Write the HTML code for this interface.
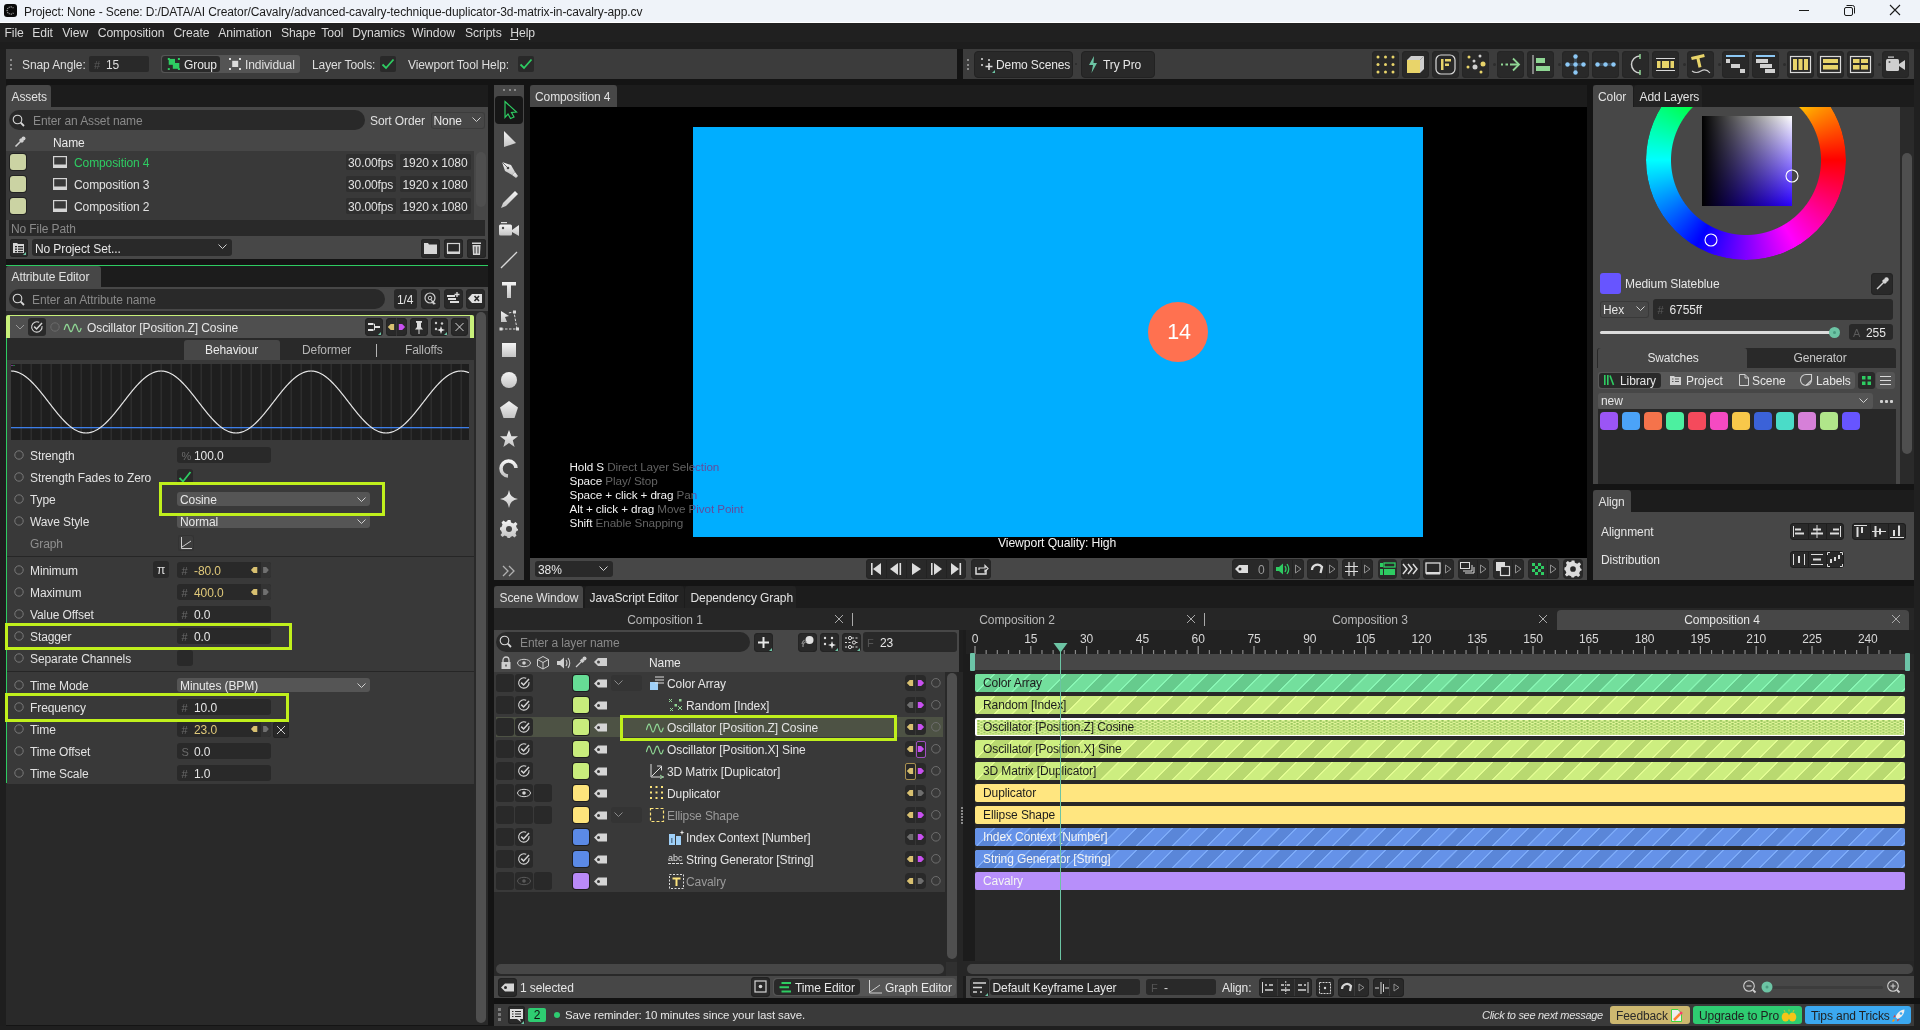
<!DOCTYPE html>
<html><head><meta charset="utf-8">
<style>
*{box-sizing:border-box;margin:0;padding:0}
html,body{width:1920px;height:1030px;overflow:hidden;background:#141414;font-family:"Liberation Sans",sans-serif;font-size:12px;color:#dcdcdc}
.a{position:absolute}
.t{position:absolute;white-space:pre;line-height:1;letter-spacing:-0.1px}
</style></head><body>
<div class="a" style="left:0px;top:42px;width:6px;height:988px;background:#1e1e1e;"></div>
<div class="a" style="left:1914px;top:42px;width:6px;height:988px;background:#202020;"></div>
<div class="a" style="left:0px;top:1026px;width:1920px;height:4px;background:#1f1f1f;"></div>
<div class="a" style="left:0px;top:0px;width:1920px;height:22px;background:#eff3f9;"></div>
<div class="a" style="left:0px;top:22px;width:1920px;height:1px;background:#ffffff;"></div>
<div class="a" style="left:4px;top:4px;width:13px;height:13px;background:#0a0a0a;border-radius:3px"></div>
<svg class="a" style="left:4px;top:4px;" width="13" height="13" viewBox="0 0 13 13"><path d="M9.5 4.2 A3.6 3.6 0 1 0 9.5 8.8" fill="none" stroke="#9a9a9a" stroke-width="1.3" stroke-dasharray="1.2 0.8"/></svg>
<div class="t" style="left:24px;top:5.84px;font-size:12px;color:#1b1b1b;">Project: None - Scene: D:/DATA/AI Creator/Cavalry/advanced-cavalry-technique-duplicator-3d-matrix-in-cavalry-app.cv</div>
<div class="a" style="left:1799px;top:10px;width:10px;height:1px;background:#1b1b1b;"></div>
<svg class="a" style="left:1843px;top:4px;" width="13" height="12" viewBox="0 0 13 12"><rect x="1.5" y="3.5" width="8" height="8" rx="1.5" fill="none" stroke="#1b1b1b" stroke-width="1"/><path d="M3.5 1.5 H9.5 A2 2 0 0 1 11.5 3.5 V9.5" fill="none" stroke="#1b1b1b" stroke-width="1"/></svg>
<svg class="a" style="left:1889px;top:4px;" width="12" height="12" viewBox="0 0 12 12"><path d="M1 1 L11 11 M11 1 L1 11" stroke="#1b1b1b" stroke-width="1.1"/></svg>
<div class="a" style="left:0px;top:23px;width:1920px;height:19px;background:#202020;"></div>
<div class="a" style="left:0px;top:42px;width:1920px;height:7px;background:#1d1d1d;"></div>
<div class="t" style="left:4.5px;top:26.67px;font-size:12.2px;color:#d8d8d8;">File</div>
<div class="t" style="left:32.3px;top:26.67px;font-size:12.2px;color:#d8d8d8;">Edit</div>
<div class="t" style="left:62.3px;top:26.67px;font-size:12.2px;color:#d8d8d8;">View</div>
<div class="t" style="left:97.7px;top:26.67px;font-size:12.2px;color:#d8d8d8;">Composition</div>
<div class="t" style="left:173.4px;top:26.67px;font-size:12.2px;color:#d8d8d8;">Create</div>
<div class="t" style="left:218.3px;top:26.67px;font-size:12.2px;color:#d8d8d8;">Animation</div>
<div class="t" style="left:280.9px;top:26.67px;font-size:12.2px;color:#d8d8d8;">Shape</div>
<div class="t" style="left:321.3px;top:26.67px;font-size:12.2px;color:#d8d8d8;">Tool</div>
<div class="t" style="left:352.3px;top:26.67px;font-size:12.2px;color:#d8d8d8;">Dynamics</div>
<div class="t" style="left:412.1px;top:26.67px;font-size:12.2px;color:#d8d8d8;">Window</div>
<div class="t" style="left:465.1px;top:26.67px;font-size:12.2px;color:#d8d8d8;">Scripts</div>
<div class="t" style="left:510.3px;top:26.67px;font-size:12.2px;color:#d8d8d8;">Help</div>
<div class="a" style="left:510px;top:39px;width:8px;height:1px;background:#d8d8d8;"></div>
<div class="a" style="left:6px;top:49px;width:951px;height:30px;background:#3c3c3c;"></div>
<div class="a" style="left:963px;top:49px;width:951px;height:30px;background:#3c3c3c;"></div>
<div class="a" style="left:10px;top:59.0px;width:2px;height:2px;background:#8a8a8a;"></div>
<div class="a" style="left:10px;top:63.5px;width:2px;height:2px;background:#8a8a8a;"></div>
<div class="a" style="left:10px;top:68.0px;width:2px;height:2px;background:#8a8a8a;"></div>
<div class="a" style="left:967px;top:59.0px;width:2px;height:2px;background:#8a8a8a;"></div>
<div class="a" style="left:967px;top:63.5px;width:2px;height:2px;background:#8a8a8a;"></div>
<div class="a" style="left:967px;top:68.0px;width:2px;height:2px;background:#8a8a8a;"></div>
<div class="t" style="left:22px;top:58.84px;font-size:12px;color:#dedede;">Snap Angle:</div>
<div class="a" style="left:89px;top:56px;width:60px;height:16px;background:#292929;border-radius:2px"></div>
<div class="t" style="left:94px;top:59.69px;font-size:11px;color:#5a5a5a;">#</div>
<div class="t" style="left:106px;top:58.84px;font-size:12px;color:#dedede;">15</div>
<div class="a" style="left:161px;top:55px;width:139px;height:18px;background:#545454;border-radius:3px"></div>
<div class="a" style="left:162px;top:56px;width:58px;height:16px;background:#2a2a2a;border-radius:3px"></div>
<svg class="a" style="left:167px;top:57px;" width="13" height="13" viewBox="0 0 13 13"><rect x="0.8" y="1" width="2" height="2" fill="#2ecc62"/><rect x="10.9" y="1" width="2" height="2" fill="#2ecc62"/><rect x="0.8" y="11.1" width="2" height="2" fill="#2ecc62"/><rect x="10.9" y="11.1" width="2" height="2" fill="#2ecc62"/><rect x="1.7" y="1.9" width="6.3" height="5.9" fill="#2ecc62"/><rect x="5.8" y="6" width="6.5" height="5.8" fill="#2ecc62"/></svg>
<div class="t" style="left:184px;top:58.84px;font-size:12px;color:#e8e8e8;">Group</div>
<svg class="a" style="left:228px;top:57px;" width="13" height="13" viewBox="0 0 13 13"><rect x="1" y="1" width="2" height="2" fill="#dcdcdc"/><rect x="11" y="1" width="2" height="2" fill="#dcdcdc"/><rect x="1" y="11" width="2" height="2" fill="#dcdcdc"/><rect x="11" y="11" width="2" height="2" fill="#dcdcdc"/><rect x="4.2" y="3.8" width="6" height="6.2" fill="#dcdcdc"/></svg>
<div class="t" style="left:245px;top:58.84px;font-size:12px;color:#e0e0e0;">Individual</div>
<div class="t" style="left:312px;top:58.84px;font-size:12px;color:#dedede;">Layer Tools:</div>
<div class="a" style="left:380px;top:56px;width:16px;height:16px;background:#292929;border-radius:2px"></div>
<svg class="a" style="left:380px;top:56px;" width="16" height="16" viewBox="0 0 16 16"><path d="M2.5 8.5 L6 12 L13.5 3.5" fill="none" stroke="#2ecc62" stroke-width="1.8"/></svg>
<div class="t" style="left:408px;top:58.84px;font-size:12px;color:#dedede;">Viewport Tool Help:</div>
<div class="a" style="left:518px;top:56px;width:16px;height:16px;background:#292929;border-radius:2px"></div>
<svg class="a" style="left:518px;top:56px;" width="16" height="16" viewBox="0 0 16 16"><path d="M2.5 8.5 L6 12 L13.5 3.5" fill="none" stroke="#2ecc62" stroke-width="1.8"/></svg>
<div class="a" style="left:974px;top:51px;width:99px;height:27px;background:#292929;border-radius:4px;border:1px solid #222"></div>
<svg class="a" style="left:980px;top:57px;" width="16" height="16" viewBox="0 0 16 16"><circle cx="2" cy="2" r="1" fill="#ddd"/><circle cx="9" cy="3" r="1" fill="#ddd"/><circle cx="2" cy="8" r="1" fill="#ddd"/><path d="M9 6 V13 M5.5 9.5 H12.5" stroke="#ddd" stroke-width="1.6"/><path d="M12 16 L15 13 V16Z" fill="#6cc4a4"/></svg>
<div class="t" style="left:996px;top:58.84px;font-size:12px;color:#e6e6e6;">Demo Scenes</div>
<div class="a" style="left:1075px;top:63px;width:2px;height:2px;background:#2a2a2a;border-radius:1px"></div>
<div class="a" style="left:1081px;top:51px;width:74px;height:27px;background:#292929;border-radius:4px;border:1px solid #222"></div>
<svg class="a" style="left:1088px;top:56px;" width="10" height="17" viewBox="0 0 10 17"><path d="M6 0 L1 9 H5 L3.5 17 L9 7 H5.5Z" fill="#6cc4a4"/></svg>
<div class="t" style="left:1103px;top:58.84px;font-size:12px;color:#e6e6e6;">Try Pro</div>
<div class="a" style="left:1372px;top:51px;width:27px;height:27px;background:#292929;border-radius:4px;box-shadow:inset 0 0 0 1px #262626"></div>
<svg class="a" style="left:1372px;top:51px;" width="27" height="27" viewBox="0 0 27 27"><circle cx="6.0" cy="6.0" r="1.5" fill="#e8d46a"/><circle cx="6.0" cy="13.5" r="1.5" fill="#e8d46a"/><circle cx="6.0" cy="21.0" r="1.5" fill="#e8d46a"/><circle cx="13.5" cy="6.0" r="1.5" fill="#e8d46a"/><circle cx="13.5" cy="13.5" r="1.5" fill="#e8d46a"/><circle cx="13.5" cy="21.0" r="1.5" fill="#e8d46a"/><circle cx="21.0" cy="6.0" r="1.5" fill="#e8d46a"/><circle cx="21.0" cy="13.5" r="1.5" fill="#e8d46a"/><circle cx="21.0" cy="21.0" r="1.5" fill="#e8d46a"/></svg>
<div class="a" style="left:1402px;top:51px;width:27px;height:27px;background:#292929;border-radius:4px;box-shadow:inset 0 0 0 1px #262626"></div>
<svg class="a" style="left:1402px;top:51px;" width="27" height="27" viewBox="0 0 27 27"><path d="M5 9 L9 5 H22 L18 9Z" fill="#cfcfcf"/><path d="M18 9 L22 5 V18 L18 22Z" fill="#cfcfcf"/><rect x="5" y="9" width="13" height="13" fill="#e8d46a"/></svg>
<div class="a" style="left:1432px;top:51px;width:27px;height:27px;background:#292929;border-radius:4px;box-shadow:inset 0 0 0 1px #262626"></div>
<svg class="a" style="left:1432px;top:51px;" width="27" height="27" viewBox="0 0 27 27"><rect x="4" y="4" width="19" height="19" rx="5" fill="none" stroke="#dadada" stroke-width="1.2"/><rect x="9" y="8" width="2.5" height="11" fill="#e8d46a"/><rect x="13" y="8" width="6" height="2.5" fill="#e8d46a"/><rect x="13" y="12.5" width="4" height="2.5" fill="#e8d46a"/></svg>
<div class="a" style="left:1462px;top:51px;width:27px;height:27px;background:#292929;border-radius:4px;box-shadow:inset 0 0 0 1px #262626"></div>
<svg class="a" style="left:1462px;top:51px;" width="27" height="27" viewBox="0 0 27 27"><circle cx="7" cy="6" r="1.5" fill="#e8d46a"/><circle cx="18" cy="5" r="1.5" fill="#cfcfcf"/><circle cx="12" cy="10" r="1.5" fill="#cfcfcf"/><circle cx="21" cy="13" r="2.5" fill="#e8d46a"/><circle cx="13" cy="16" r="2.5" fill="#cfcfcf"/><circle cx="6" cy="16" r="1.5" fill="#e8d46a"/><circle cx="19" cy="21" r="1.5" fill="#e8d46a"/></svg>
<div class="a" style="left:1497px;top:51px;width:27px;height:27px;background:#292929;border-radius:4px;box-shadow:inset 0 0 0 1px #262626"></div>
<svg class="a" style="left:1497px;top:51px;" width="27" height="27" viewBox="0 0 27 27"><path d="M4 13.5 H6 M8.5 13.5 H11 M13 13.5 H22" stroke="#8fd694" stroke-width="1.8"/><path d="M16 7.5 L22 13.5 L16 19.5" fill="none" stroke="#8fd694" stroke-width="1.8"/></svg>
<div class="a" style="left:1527px;top:51px;width:27px;height:27px;background:#292929;border-radius:4px;box-shadow:inset 0 0 0 1px #262626"></div>
<svg class="a" style="left:1527px;top:51px;" width="27" height="27" viewBox="0 0 27 27"><rect x="5.5" y="4" width="1" height="19" fill="#dadada"/><rect x="9" y="7" width="9" height="5" fill="#8fd694"/><rect x="9" y="15" width="14" height="5" fill="#8fd694"/></svg>
<div class="a" style="left:1562px;top:51px;width:27px;height:27px;background:#292929;border-radius:4px;box-shadow:inset 0 0 0 1px #262626"></div>
<svg class="a" style="left:1562px;top:51px;" width="27" height="27" viewBox="0 0 27 27"><path d="M13.5 5 V22 M5 13.5 H22" stroke="#3a4a58" stroke-width="3"/><circle cx="13.5" cy="5.5" r="2.2" fill="#8cc8f5"/><circle cx="5.5" cy="13.5" r="2.2" fill="#8cc8f5"/><circle cx="13.5" cy="13.5" r="2.2" fill="#8cc8f5"/><circle cx="21.5" cy="13.5" r="2.2" fill="#8cc8f5"/><circle cx="13.5" cy="21.5" r="2.2" fill="#8cc8f5"/></svg>
<div class="a" style="left:1592px;top:51px;width:27px;height:27px;background:#292929;border-radius:4px;box-shadow:inset 0 0 0 1px #262626"></div>
<svg class="a" style="left:1592px;top:51px;" width="27" height="27" viewBox="0 0 27 27"><path d="M5 13.5 H22" stroke="#3a4a58" stroke-width="3"/><circle cx="5.5" cy="13.5" r="2.2" fill="#8cc8f5"/><circle cx="13.5" cy="13.5" r="2.2" fill="#8cc8f5"/><circle cx="21.5" cy="13.5" r="2.2" fill="#8cc8f5"/></svg>
<div class="a" style="left:1622px;top:51px;width:27px;height:27px;background:#292929;border-radius:4px;box-shadow:inset 0 0 0 1px #262626"></div>
<svg class="a" style="left:1622px;top:51px;" width="27" height="27" viewBox="0 0 27 27"><path d="M18 5 A8.5 8.5 0 1 0 18 22" fill="none" stroke="#cfcfcf" stroke-width="1.5"/><path d="M18 3 V8 M18 19 V24" stroke="#8fd694" stroke-width="1.5"/></svg>
<div class="a" style="left:1652px;top:51px;width:27px;height:27px;background:#292929;border-radius:4px;box-shadow:inset 0 0 0 1px #262626"></div>
<svg class="a" style="left:1652px;top:51px;" width="27" height="27" viewBox="0 0 27 27"><rect x="4" y="7" width="19" height="1" fill="#dadada"/><rect x="4" y="19" width="19" height="1" fill="#dadada"/><rect x="5" y="10" width="3.5" height="7" fill="#e8d46a"/><rect x="10" y="10" width="7" height="7" fill="#e8d46a"/><rect x="18.5" y="10" width="3.5" height="7" fill="#e8d46a"/></svg>
<div class="a" style="left:1687px;top:51px;width:27px;height:27px;background:#292929;border-radius:4px;box-shadow:inset 0 0 0 1px #262626"></div>
<svg class="a" style="left:1687px;top:51px;" width="27" height="27" viewBox="0 0 27 27"><path d="M4 6 L17 3 L17.8 6 L12.5 7.3 L14.5 16 L11.5 16.8 L9.5 8 L4.8 9Z" fill="#e8d46a"/><path d="M5 20 Q9 23 14 20 T23 22" fill="none" stroke="#cfcfcf" stroke-width="1.1"/></svg>
<div class="a" style="left:1722px;top:51px;width:27px;height:27px;background:#292929;border-radius:4px;box-shadow:inset 0 0 0 1px #262626"></div>
<svg class="a" style="left:1722px;top:51px;" width="27" height="27" viewBox="0 0 27 27"><rect x="4" y="4" width="19" height="2" fill="#8cc8f5"/><rect x="4" y="8" width="4" height="4" fill="#d0d0d0"/><rect x="9" y="13" width="9" height="4" fill="#d0d0d0"/><rect x="18" y="18" width="5" height="4" fill="#d0d0d0"/></svg>
<div class="a" style="left:1752px;top:51px;width:27px;height:27px;background:#292929;border-radius:4px;box-shadow:inset 0 0 0 1px #262626"></div>
<svg class="a" style="left:1752px;top:51px;" width="27" height="27" viewBox="0 0 27 27"><rect x="4" y="4" width="19" height="2" fill="#8cc8f5"/><rect x="4" y="8" width="12" height="4" fill="#d0d0d0"/><rect x="8" y="13" width="12" height="4" fill="#d0d0d0"/><rect x="13" y="18" width="10" height="4" fill="#d0d0d0"/></svg>
<div class="a" style="left:1787px;top:51px;width:27px;height:27px;background:#292929;border-radius:4px;box-shadow:inset 0 0 0 1px #262626"></div>
<svg class="a" style="left:1787px;top:51px;" width="27" height="27" viewBox="0 0 27 27"><rect x="3.5" y="5.5" width="20" height="16" fill="none" stroke="#dadada" stroke-width="1.2"/><rect x="6" y="8" width="4" height="11" fill="#e8d46a"/><rect x="11.5" y="8" width="4" height="11" fill="#e8d46a"/><rect x="17" y="8" width="4" height="11" fill="#e8d46a"/></svg>
<div class="a" style="left:1817px;top:51px;width:27px;height:27px;background:#292929;border-radius:4px;box-shadow:inset 0 0 0 1px #262626"></div>
<svg class="a" style="left:1817px;top:51px;" width="27" height="27" viewBox="0 0 27 27"><rect x="3.5" y="5.5" width="20" height="16" fill="none" stroke="#dadada" stroke-width="1.2"/><rect x="6" y="8" width="15" height="4" fill="#e8d46a"/><rect x="6" y="14" width="15" height="4.5" fill="#e8d46a"/></svg>
<div class="a" style="left:1847px;top:51px;width:27px;height:27px;background:#292929;border-radius:4px;box-shadow:inset 0 0 0 1px #262626"></div>
<svg class="a" style="left:1847px;top:51px;" width="27" height="27" viewBox="0 0 27 27"><rect x="3.5" y="5.5" width="20" height="16" fill="none" stroke="#dadada" stroke-width="1.2"/><rect x="6" y="8" width="6.5" height="4" fill="#e8d46a"/><rect x="14" y="8" width="7" height="4" fill="#e8d46a"/><rect x="6" y="14" width="6.5" height="4.5" fill="#e8d46a"/><rect x="14" y="14" width="7" height="4.5" fill="#e8d46a"/></svg>
<div class="a" style="left:1882px;top:51px;width:27px;height:27px;background:#292929;border-radius:4px;box-shadow:inset 0 0 0 1px #262626"></div>
<svg class="a" style="left:1882px;top:51px;" width="27" height="27" viewBox="0 0 27 27"><rect x="4" y="8" width="13" height="12" rx="1.5" fill="#cfcfcf"/><rect x="6" y="5.5" width="6" height="1.2" fill="#cfcfcf"/><path d="M17 13 L23 9 V19 L17 15Z" fill="#cfcfcf"/><circle cx="7.5" cy="11" r="1" fill="#555"/></svg>
<div class="a" style="left:1493px;top:63px;width:3px;height:3px;background:#2c2c2c;border-radius:2px"></div>
<div class="a" style="left:1558px;top:63px;width:3px;height:3px;background:#2c2c2c;border-radius:2px"></div>
<div class="a" style="left:1683px;top:63px;width:3px;height:3px;background:#2c2c2c;border-radius:2px"></div>
<div class="a" style="left:1718px;top:63px;width:3px;height:3px;background:#2c2c2c;border-radius:2px"></div>
<div class="a" style="left:1783px;top:63px;width:3px;height:3px;background:#2c2c2c;border-radius:2px"></div>
<div class="a" style="left:1878px;top:63px;width:3px;height:3px;background:#2c2c2c;border-radius:2px"></div>
<div class="a" style="left:6px;top:85px;width:482px;height:22px;background:#1c1c1c;"></div>
<div class="a" style="left:6px;top:85px;width:45px;height:22px;background:#474747;border-radius:3px 3px 0 0"></div>
<div class="t" style="left:11.5px;top:90.84px;font-size:12px;color:#e2e2e2;">Assets</div>
<div class="a" style="left:6px;top:107px;width:482px;height:152px;background:#474747;"></div>
<div class="a" style="left:9px;top:110px;width:356px;height:20px;background:#292929;border-radius:10px"></div>
<svg class="a" style="left:12px;top:114px;" width="14" height="14" viewBox="0 0 14 14"><circle cx="5.5" cy="5.5" r="4.3" fill="none" stroke="#d8d8d8" stroke-width="1.1"/><path d="M8.7 8.7 L12 12" stroke="#d8d8d8" stroke-width="1.8"/></svg>
<div class="t" style="left:33px;top:114.84px;font-size:12px;color:#8a8a8a;">Enter an Asset name</div>
<div class="t" style="left:370px;top:114.84px;font-size:12px;color:#e0e0e0;">Sort Order</div>
<div class="a" style="left:431px;top:111.5px;width:54px;height:17px;background:#474747;border-radius:3px;box-shadow:inset 0 0 0 1px #3c3c3c"></div>
<div class="t" style="left:433.5px;top:114.84px;font-size:12px;color:#e8e8e8;">None</div>
<svg class="a" style="left:472px;top:117px;" width="9" height="6" viewBox="0 0 9 6"><path d="M0.5 0.5 L4.5 4.5 L8.5 0.5" fill="none" stroke="#cfcfcf" stroke-width="1"/></svg>
<svg class="a" style="left:14px;top:136px;" width="12" height="12" viewBox="0 0 12 12"><path d="M1.5 10.5 L7 5" stroke="#cfcfcf" stroke-width="1.6"/><path d="M6 3 L9 6" stroke="#cfcfcf" stroke-width="3"/><circle cx="9.5" cy="2.5" r="2" fill="#cfcfcf"/></svg>
<div class="t" style="left:53px;top:136.84px;font-size:12px;color:#eaeaea;">Name</div>
<div class="a" style="left:6px;top:151px;width:468px;height:69px;background:#393939;"></div>
<div class="a" style="left:474px;top:151px;width:14px;height:69px;background:#474747;"></div>
<div class="a" style="left:476px;top:152px;width:10px;height:55px;background:#4f4f4f;border-radius:5px"></div>
<div class="a" style="left:10px;top:154px;width:16px;height:16px;background:#cbd3a3;border-radius:3px;box-shadow:0 0 0 1px #222"></div>
<svg class="a" style="left:53px;top:156px;" width="14" height="12" viewBox="0 0 14 12"><rect x="0.6" y="0.6" width="12.8" height="10.8" fill="none" stroke="#d5d5d5" stroke-width="1.2"/><rect x="0.6" y="8.5" width="12.8" height="3" fill="#d5d5d5"/></svg>
<div class="t" style="left:74px;top:156.84px;font-size:12px;color:#2ecc62;">Composition 4</div>
<div class="a" style="left:346px;top:154px;width:50px;height:16px;background:#2f2f2f;border-radius:2px"></div>
<div class="t" style="left:348px;top:156.84px;font-size:12px;color:#e2e2e2;">30.00fps</div>
<div class="a" style="left:400px;top:154px;width:71px;height:16px;background:#2f2f2f;border-radius:2px"></div>
<div class="t" style="left:402.5px;top:156.84px;font-size:12px;color:#e2e2e2;">1920 x 1080</div>
<div class="a" style="left:10px;top:176px;width:16px;height:16px;background:#cbd3a3;border-radius:3px;box-shadow:0 0 0 1px #222"></div>
<svg class="a" style="left:53px;top:178px;" width="14" height="12" viewBox="0 0 14 12"><rect x="0.6" y="0.6" width="12.8" height="10.8" fill="none" stroke="#d5d5d5" stroke-width="1.2"/><rect x="0.6" y="8.5" width="12.8" height="3" fill="#d5d5d5"/></svg>
<div class="t" style="left:74px;top:178.84px;font-size:12px;color:#e2e2e2;">Composition 3</div>
<div class="a" style="left:346px;top:176px;width:50px;height:16px;background:#2f2f2f;border-radius:2px"></div>
<div class="t" style="left:348px;top:178.84px;font-size:12px;color:#e2e2e2;">30.00fps</div>
<div class="a" style="left:400px;top:176px;width:71px;height:16px;background:#2f2f2f;border-radius:2px"></div>
<div class="t" style="left:402.5px;top:178.84px;font-size:12px;color:#e2e2e2;">1920 x 1080</div>
<div class="a" style="left:10px;top:198px;width:16px;height:16px;background:#cbd3a3;border-radius:3px;box-shadow:0 0 0 1px #222"></div>
<svg class="a" style="left:53px;top:200px;" width="14" height="12" viewBox="0 0 14 12"><rect x="0.6" y="0.6" width="12.8" height="10.8" fill="none" stroke="#d5d5d5" stroke-width="1.2"/><rect x="0.6" y="8.5" width="12.8" height="3" fill="#d5d5d5"/></svg>
<div class="t" style="left:74px;top:200.84px;font-size:12px;color:#e2e2e2;">Composition 2</div>
<div class="a" style="left:346px;top:198px;width:50px;height:16px;background:#2f2f2f;border-radius:2px"></div>
<div class="t" style="left:348px;top:200.84px;font-size:12px;color:#e2e2e2;">30.00fps</div>
<div class="a" style="left:400px;top:198px;width:71px;height:16px;background:#2f2f2f;border-radius:2px"></div>
<div class="t" style="left:402.5px;top:200.84px;font-size:12px;color:#e2e2e2;">1920 x 1080</div>
<div class="a" style="left:9px;top:220px;width:476px;height:16px;background:#292929;"></div>
<div class="t" style="left:11px;top:222.84px;font-size:12px;color:#8a8a8a;">No File Path</div>
<div class="a" style="left:10px;top:239px;width:18px;height:18px;background:#292929;border-radius:3px;box-shadow:inset 0 0 0 1px #242424"></div>
<svg class="a" style="left:12px;top:241px;" width="14" height="14" viewBox="0 0 14 14"><path d="M1 2 H5 L6 3 H12 V12 H1Z" fill="#d5d5d5"/><rect x="3" y="5" width="2" height="1.3" fill="#292929"/><rect x="6" y="5" width="5" height="1.3" fill="#292929"/><rect x="3" y="7.5" width="2" height="1.3" fill="#292929"/><rect x="6" y="7.5" width="5" height="1.3" fill="#292929"/><rect x="3" y="10" width="2" height="1.3" fill="#292929"/><rect x="6" y="10" width="5" height="1.3" fill="#292929"/><path d="M11 14 L14 11 V14Z" fill="#6cc4a4"/></svg>
<div class="a" style="left:32px;top:239px;width:200px;height:17px;background:#292929;border-radius:3px"></div>
<div class="t" style="left:35px;top:242.84px;font-size:12px;color:#e6e6e6;">No Project Set...</div>
<svg class="a" style="left:218px;top:244px;" width="9" height="6" viewBox="0 0 9 6"><path d="M0.5 0.5 L4.5 4.5 L8.5 0.5" fill="none" stroke="#cfcfcf" stroke-width="1"/></svg>
<div class="a" style="left:420.5px;top:238.5px;width:19px;height:19px;background:#292929;border-radius:3px;box-shadow:inset 0 0 0 1px #242424"></div>
<svg class="a" style="left:420.5px;top:238.5px;" width="19" height="19" viewBox="0 0 19 19"><path d="M3 4 H7 L8 5.5 H16 V15 H3Z" fill="#d5d5d5"/></svg>
<div class="a" style="left:443.5px;top:238.5px;width:19px;height:19px;background:#292929;border-radius:3px;box-shadow:inset 0 0 0 1px #242424"></div>
<svg class="a" style="left:443.5px;top:238.5px;" width="19" height="19" viewBox="0 0 19 19"><rect x="3.5" y="4.5" width="12" height="9" fill="none" stroke="#d5d5d5" stroke-width="1.2"/><rect x="3" y="12.5" width="13" height="2.5" fill="#d5d5d5"/></svg>
<div class="a" style="left:466.5px;top:238.5px;width:19px;height:19px;background:#292929;border-radius:3px;box-shadow:inset 0 0 0 1px #242424"></div>
<svg class="a" style="left:466.5px;top:238.5px;" width="19" height="19" viewBox="0 0 19 19"><rect x="5" y="3.5" width="9" height="1.5" fill="#d5d5d5"/><path d="M5.5 6 H13.5 L13 16 H6Z" fill="#d5d5d5"/><path d="M8 7.5 V14.5 M11 7.5 V14.5" stroke="#292929" stroke-width="1"/></svg>
<div class="a" style="left:6px;top:265px;width:482px;height:1px;background:#2ecc62;"></div>
<div class="a" style="left:6px;top:266px;width:482px;height:21px;background:#1c1c1c;"></div>
<div class="a" style="left:6px;top:266px;width:95px;height:21px;background:#474747;border-radius:3px 3px 0 0"></div>
<div class="t" style="left:11.5px;top:270.84px;font-size:12px;color:#e2e2e2;">Attribute Editor</div>
<div class="a" style="left:6px;top:287px;width:482px;height:24px;background:#474747;"></div>
<div class="a" style="left:6px;top:311px;width:482px;height:714px;background:#292929;"></div>
<div class="a" style="left:9px;top:289px;width:376px;height:20px;background:#292929;border-radius:10px"></div>
<svg class="a" style="left:12px;top:293px;" width="14" height="14" viewBox="0 0 14 14"><circle cx="5.5" cy="5.5" r="4.3" fill="none" stroke="#d8d8d8" stroke-width="1.1"/><path d="M8.7 8.7 L12 12" stroke="#d8d8d8" stroke-width="1.8"/></svg>
<div class="t" style="left:32px;top:293.84px;font-size:12px;color:#8a8a8a;">Enter an Attribute name</div>
<div class="a" style="left:394px;top:289px;width:23px;height:19.5px;background:#292929;border-radius:3px"></div>
<div class="t" style="left:397px;top:293.84px;font-size:12px;color:#e6e6e6;">1/4</div>
<div class="a" style="left:420.5px;top:289px;width:19.5px;height:19.5px;background:#292929;border-radius:4px;box-shadow:inset 0 0 0 1px #262626"></div>
<svg class="a" style="left:420.5px;top:289px;" width="19" height="19" viewBox="0 0 19 19"><circle cx="9" cy="9" r="5" fill="none" stroke="#cfcfcf" stroke-width="1.2"/><circle cx="9" cy="9" r="1.8" fill="none" stroke="#cfcfcf" stroke-width="1"/><path d="M9 9 L15 15 L12 15.5Z M10 10 L15.5 12Z" fill="#cfcfcf"/></svg>
<div class="a" style="left:443.5px;top:289px;width:19.5px;height:19.5px;background:#292929;border-radius:4px;box-shadow:inset 0 0 0 1px #262626"></div>
<svg class="a" style="left:443.5px;top:289px;" width="19" height="19" viewBox="0 0 19 19"><rect x="3" y="6" width="8" height="2" fill="#e0e0e0"/><rect x="4" y="9" width="8" height="2" fill="#e0e0e0"/><rect x="6" y="12" width="9" height="2" fill="#e0e0e0"/><path d="M13 3 V8 M10.5 5.5 H15.5" stroke="#e0e0e0" stroke-width="1.3"/></svg>
<div class="a" style="left:465.5px;top:289px;width:19.5px;height:19.5px;background:#292929;border-radius:4px;box-shadow:inset 0 0 0 1px #262626"></div>
<svg class="a" style="left:465.5px;top:289px;" width="19" height="19" viewBox="0 0 19 19"><path d="M2 9.5 L6 5 H16 V14 H6Z" fill="#e0e0e0"/><path d="M8.5 7 L13 12 M13 7 L8.5 12" stroke="#292929" stroke-width="1.6"/></svg>
<div class="a" style="left:476px;top:312px;width:10px;height:711px;background:#4f4f4f;border-radius:5px"></div>
<div class="a" style="left:6px;top:315px;width:468px;height:23px;background:#c8f07a;border-radius:2px 2px 0 0"></div>
<div class="a" style="left:10px;top:316px;width:460px;height:22px;background:#4f4f4f;"></div>
<div class="a" style="left:6px;top:338px;width:1px;height:445px;background:#2ecc62;"></div>
<svg class="a" style="left:15px;top:322px;" width="10" height="10" viewBox="0 0 10 10"><path d="M1 3 L5 7 L9 3" fill="none" stroke="#9a9a9a" stroke-width="1"/></svg>
<div class="a" style="left:28px;top:318px;width:18px;height:18px;background:#292929;border-radius:3px"></div>
<svg class="a" style="left:28px;top:318px;" width="18" height="18" viewBox="0 0 18 18"><path d="M14 8.2 A5.2 5.2 0 1 1 11.2 4.3" fill="none" stroke="#d5d5d5" stroke-width="1.1"/><path d="M6.2 8.6 L8.6 11 L14 5" fill="none" stroke="#d5d5d5" stroke-width="1.5"/></svg>
<svg class="a" style="left:50px;top:322px;" width="10" height="10" viewBox="0 0 10 10"><circle cx="5" cy="5" r="4.2" fill="none" stroke="#6a6a6a" stroke-width="1"/></svg>
<svg class="a" style="left:62px;top:318px;" width="22" height="16" viewBox="0 0 22 16"><polyline points="2.30,11.44 2.55,10.78 2.80,10.09 3.05,9.39 3.30,8.72 3.55,8.08 3.80,7.52 4.05,7.05 4.30,6.68 4.55,6.43 4.80,6.31 5.05,6.32 5.30,6.47 5.55,6.74 5.80,7.13 6.05,7.63 6.30,8.21 6.55,8.85 6.80,9.53 7.05,10.23 7.30,10.92 7.55,11.57 7.80,12.16 8.05,12.67 8.30,13.09 8.55,13.39 8.80,13.56 9.05,13.60 9.30,13.50 9.55,13.28 9.80,12.94 10.05,12.48 10.30,11.93 10.55,11.31 10.80,10.64 11.05,9.95 11.30,9.26 11.55,8.59 11.80,7.97 12.05,7.42 12.30,6.96 12.55,6.62 12.80,6.40 13.05,6.30 13.30,6.34 13.55,6.51 13.80,6.81 14.05,7.23 14.30,7.74 14.55,8.33 14.80,8.98 15.05,9.67 15.30,10.37 15.55,11.05 15.80,11.69 16.05,12.27 16.30,12.77 16.55,13.16 16.80,13.43 17.05,13.58 17.30,13.59 17.55,13.47 17.80,13.22 18.05,12.85 18.30,12.38 18.55,11.82 18.80,11.18 19.05,10.51" fill="none" stroke="#8fd694" stroke-width="1.3" stroke-linecap="round"/></svg>
<div class="t" style="left:87px;top:321.84px;font-size:12px;color:#e6e6e6;">Oscillator [Position.Z] Cosine</div>
<div class="a" style="left:365px;top:318px;width:17.5px;height:18px;background:#292929;border-radius:4px;box-shadow:inset 0 0 0 1px #242424"></div>
<svg class="a" style="left:365px;top:318px;" width="17.5" height="18" viewBox="0 0 17.5 18"><rect x="3" y="5" width="5" height="2" fill="#e0e0e0"/><rect x="3" y="11" width="5" height="2" fill="#e0e0e0"/><path d="M8 6 H9.5 V12 H8" fill="none" stroke="#e0e0e0" stroke-width="1"/><rect x="10" y="8" width="5" height="2" fill="#e0e0e0"/><path d="M13 17 L16 14 V17Z" fill="#6cc4a4"/></svg>
<div class="a" style="left:386px;top:318px;width:21px;height:18px;background:#292929;border-radius:4px;box-shadow:inset 0 0 0 1px #242424"></div>
<svg class="a" style="left:386px;top:318px;" width="21" height="18" viewBox="0 0 21 18"><rect x="10" y="0" width="1" height="18" fill="#363636"/><path d="M8.1 5.9 H4.7 L1.8 8.95 L4.7 12 H8.1Z" fill="#d8c070"/><path d="M12.8 5.9 H16.2 L19.1 8.95 L16.2 12 H12.8Z" fill="#c850f0"/></svg>
<div class="a" style="left:410px;top:318px;width:17.5px;height:18px;background:#292929;border-radius:4px;box-shadow:inset 0 0 0 1px #242424"></div>
<svg class="a" style="left:410px;top:318px;" width="17.5" height="18" viewBox="0 0 17.5 18"><path d="M6 3 H12 V4.5 L11 5 V9 L13 11.5 H5 L7 9 V5 L6 4.5Z" fill="#dadada"/><rect x="8.5" y="11" width="1" height="5" fill="#dadada"/></svg>
<div class="a" style="left:430.5px;top:318px;width:17px;height:18px;background:#292929;border-radius:4px;box-shadow:inset 0 0 0 1px #242424"></div>
<svg class="a" style="left:430.5px;top:318px;" width="17" height="18" viewBox="0 0 17 18"><circle cx="5" cy="5" r="1.2" fill="#ccc"/><circle cx="11" cy="5.5" r="1.2" fill="#ccc"/><circle cx="5" cy="11" r="1.2" fill="#ccc"/><path d="M10 8 L11 11 L14 12 L11 13 L10 16 L9 13 L6 12 L9 11Z" fill="#e8e8e8"/><path d="M13 17 L16 14 V17Z" fill="#6cc4a4"/></svg>
<div class="a" style="left:450.5px;top:318px;width:17px;height:18px;background:#292929;border-radius:4px;box-shadow:inset 0 0 0 1px #242424"></div>
<svg class="a" style="left:450.5px;top:318px;" width="17" height="18" viewBox="0 0 17 18"><path d="M4.5 5 L12.5 13 M12.5 5 L4.5 13" stroke="#d8d8d8" stroke-width="1"/></svg>
<div class="a" style="left:7px;top:338px;width:467px;height:22px;background:#292929;"></div>
<div class="a" style="left:184px;top:340px;width:96px;height:20px;background:#474747;border-radius:3px 3px 0 0"></div>
<div class="t" style="left:205px;top:343.84px;font-size:12px;color:#eaeaea;">Behaviour</div>
<div class="t" style="left:302px;top:343.84px;font-size:12px;color:#b5b5b5;">Deformer</div>
<div class="a" style="left:375.5px;top:344px;width:1px;height:13px;background:#b5b5b5;"></div>
<div class="t" style="left:405px;top:343.84px;font-size:12px;color:#b5b5b5;">Falloffs</div>
<div class="a" style="left:7px;top:360px;width:467px;height:424px;background:#393939;"></div>
<div class="a" style="left:11px;top:364px;width:458px;height:76px;background:#1e1e1e;"></div>
<svg class="a" style="left:11px;top:364px;" width="458" height="76" viewBox="0 0 458 76"><rect x="9.5" y="0" width="1.4" height="76" fill="#2f2f2f"/><rect x="19.5" y="0" width="1.4" height="76" fill="#2f2f2f"/><rect x="29.5" y="0" width="1.4" height="76" fill="#2f2f2f"/><rect x="39.5" y="0" width="1.4" height="76" fill="#2f2f2f"/><rect x="49.5" y="0" width="1.4" height="76" fill="#2f2f2f"/><rect x="59.5" y="0" width="1.4" height="76" fill="#2f2f2f"/><rect x="69.5" y="0" width="1.4" height="76" fill="#2f2f2f"/><rect x="79.5" y="0" width="1.4" height="76" fill="#2f2f2f"/><rect x="89.5" y="0" width="1.4" height="76" fill="#2f2f2f"/><rect x="99.5" y="0" width="1.4" height="76" fill="#2f2f2f"/><rect x="109.5" y="0" width="1.4" height="76" fill="#2f2f2f"/><rect x="119.5" y="0" width="1.4" height="76" fill="#2f2f2f"/><rect x="129.5" y="0" width="1.4" height="76" fill="#2f2f2f"/><rect x="139.5" y="0" width="1.4" height="76" fill="#2f2f2f"/><rect x="149.5" y="0" width="1.4" height="76" fill="#2f2f2f"/><rect x="159.5" y="0" width="1.4" height="76" fill="#2f2f2f"/><rect x="169.5" y="0" width="1.4" height="76" fill="#2f2f2f"/><rect x="179.5" y="0" width="1.4" height="76" fill="#2f2f2f"/><rect x="189.5" y="0" width="1.4" height="76" fill="#2f2f2f"/><rect x="199.5" y="0" width="1.4" height="76" fill="#2f2f2f"/><rect x="209.5" y="0" width="1.4" height="76" fill="#2f2f2f"/><rect x="219.5" y="0" width="1.4" height="76" fill="#2f2f2f"/><rect x="229.5" y="0" width="1.4" height="76" fill="#2f2f2f"/><rect x="239.5" y="0" width="1.4" height="76" fill="#2f2f2f"/><rect x="249.5" y="0" width="1.4" height="76" fill="#2f2f2f"/><rect x="259.5" y="0" width="1.4" height="76" fill="#2f2f2f"/><rect x="269.5" y="0" width="1.4" height="76" fill="#2f2f2f"/><rect x="279.5" y="0" width="1.4" height="76" fill="#2f2f2f"/><rect x="289.5" y="0" width="1.4" height="76" fill="#2f2f2f"/><rect x="299.5" y="0" width="1.4" height="76" fill="#2f2f2f"/><rect x="309.5" y="0" width="1.4" height="76" fill="#2f2f2f"/><rect x="319.5" y="0" width="1.4" height="76" fill="#2f2f2f"/><rect x="329.5" y="0" width="1.4" height="76" fill="#2f2f2f"/><rect x="339.5" y="0" width="1.4" height="76" fill="#2f2f2f"/><rect x="349.5" y="0" width="1.4" height="76" fill="#2f2f2f"/><rect x="359.5" y="0" width="1.4" height="76" fill="#2f2f2f"/><rect x="369.5" y="0" width="1.4" height="76" fill="#2f2f2f"/><rect x="379.5" y="0" width="1.4" height="76" fill="#2f2f2f"/><rect x="389.5" y="0" width="1.4" height="76" fill="#2f2f2f"/><rect x="399.5" y="0" width="1.4" height="76" fill="#2f2f2f"/><rect x="409.5" y="0" width="1.4" height="76" fill="#2f2f2f"/><rect x="419.5" y="0" width="1.4" height="76" fill="#2f2f2f"/><rect x="429.5" y="0" width="1.4" height="76" fill="#2f2f2f"/><rect x="439.5" y="0" width="1.4" height="76" fill="#2f2f2f"/><rect x="449.5" y="0" width="1.4" height="76" fill="#2f2f2f"/><rect x="459.5" y="0" width="1.4" height="76" fill="#2f2f2f"/><rect x="0" y="63" width="458" height="1.3" fill="#3d7ee8"/><polyline points="0.0,7.00 0.5,7.01 1.0,7.03 1.5,7.06 2.0,7.11 2.5,7.17 3.0,7.24 3.5,7.33 4.0,7.43 4.5,7.55 5.0,7.68 5.5,7.82 6.0,7.97 6.5,8.14 7.0,8.32 7.5,8.52 8.0,8.72 8.5,8.94 9.0,9.18 9.5,9.42 10.0,9.68 10.5,9.95 11.0,10.23 11.5,10.53 12.0,10.83 12.5,11.15 13.0,11.48 13.5,11.83 14.0,12.18 14.5,12.54 15.0,12.92 15.5,13.31 16.0,13.71 16.5,14.11 17.0,14.53 17.5,14.96 18.0,15.40 18.5,15.85 19.0,16.31 19.5,16.78 20.0,17.26 20.5,17.74 21.0,18.24 21.5,18.74 22.0,19.26 22.5,19.78 23.0,20.31 23.5,20.84 24.0,21.39 24.5,21.94 25.0,22.50 25.5,23.07 26.0,23.64 26.5,24.22 27.0,24.80 27.5,25.39 28.0,25.99 28.5,26.59 29.0,27.19 29.5,27.81 30.0,28.42 30.5,29.04 31.0,29.66 31.5,30.29 32.0,30.92 32.5,31.55 33.0,32.19 33.5,32.83 34.0,33.47 34.5,34.11 35.0,34.76 35.5,35.41 36.0,36.05 36.5,36.70 37.0,37.35 37.5,38.00 38.0,38.65 38.5,39.30 39.0,39.95 39.5,40.59 40.0,41.24 40.5,41.89 41.0,42.53 41.5,43.17 42.0,43.81 42.5,44.45 43.0,45.08 43.5,45.71 44.0,46.34 44.5,46.96 45.0,47.58 45.5,48.19 46.0,48.81 46.5,49.41 47.0,50.01 47.5,50.61 48.0,51.20 48.5,51.78 49.0,52.36 49.5,52.93 50.0,53.50 50.5,54.06 51.0,54.61 51.5,55.16 52.0,55.69 52.5,56.22 53.0,56.74 53.5,57.26 54.0,57.76 54.5,58.26 55.0,58.74 55.5,59.22 56.0,59.69 56.5,60.15 57.0,60.60 57.5,61.04 58.0,61.47 58.5,61.89 59.0,62.29 59.5,62.69 60.0,63.08 60.5,63.46 61.0,63.82 61.5,64.17 62.0,64.52 62.5,64.85 63.0,65.17 63.5,65.47 64.0,65.77 64.5,66.05 65.0,66.32 65.5,66.58 66.0,66.82 66.5,67.06 67.0,67.28 67.5,67.48 68.0,67.68 68.5,67.86 69.0,68.03 69.5,68.18 70.0,68.32 70.5,68.45 71.0,68.57 71.5,68.67 72.0,68.76 72.5,68.83 73.0,68.89 73.5,68.94 74.0,68.97 74.5,68.99 75.0,69.00 75.5,68.99 76.0,68.97 76.5,68.94 77.0,68.89 77.5,68.83 78.0,68.76 78.5,68.67 79.0,68.57 79.5,68.45 80.0,68.32 80.5,68.18 81.0,68.03 81.5,67.86 82.0,67.68 82.5,67.48 83.0,67.28 83.5,67.06 84.0,66.82 84.5,66.58 85.0,66.32 85.5,66.05 86.0,65.77 86.5,65.47 87.0,65.17 87.5,64.85 88.0,64.52 88.5,64.17 89.0,63.82 89.5,63.46 90.0,63.08 90.5,62.69 91.0,62.29 91.5,61.89 92.0,61.47 92.5,61.04 93.0,60.60 93.5,60.15 94.0,59.69 94.5,59.22 95.0,58.74 95.5,58.26 96.0,57.76 96.5,57.26 97.0,56.74 97.5,56.22 98.0,55.69 98.5,55.16 99.0,54.61 99.5,54.06 100.0,53.50 100.5,52.93 101.0,52.36 101.5,51.78 102.0,51.20 102.5,50.61 103.0,50.01 103.5,49.41 104.0,48.81 104.5,48.19 105.0,47.58 105.5,46.96 106.0,46.34 106.5,45.71 107.0,45.08 107.5,44.45 108.0,43.81 108.5,43.17 109.0,42.53 109.5,41.89 110.0,41.24 110.5,40.59 111.0,39.95 111.5,39.30 112.0,38.65 112.5,38.00 113.0,37.35 113.5,36.70 114.0,36.05 114.5,35.41 115.0,34.76 115.5,34.11 116.0,33.47 116.5,32.83 117.0,32.19 117.5,31.55 118.0,30.92 118.5,30.29 119.0,29.66 119.5,29.04 120.0,28.42 120.5,27.81 121.0,27.19 121.5,26.59 122.0,25.99 122.5,25.39 123.0,24.80 123.5,24.22 124.0,23.64 124.5,23.07 125.0,22.50 125.5,21.94 126.0,21.39 126.5,20.84 127.0,20.31 127.5,19.78 128.0,19.26 128.5,18.74 129.0,18.24 129.5,17.74 130.0,17.26 130.5,16.78 131.0,16.31 131.5,15.85 132.0,15.40 132.5,14.96 133.0,14.53 133.5,14.11 134.0,13.71 134.5,13.31 135.0,12.92 135.5,12.54 136.0,12.18 136.5,11.83 137.0,11.48 137.5,11.15 138.0,10.83 138.5,10.53 139.0,10.23 139.5,9.95 140.0,9.68 140.5,9.42 141.0,9.18 141.5,8.94 142.0,8.72 142.5,8.52 143.0,8.32 143.5,8.14 144.0,7.97 144.5,7.82 145.0,7.68 145.5,7.55 146.0,7.43 146.5,7.33 147.0,7.24 147.5,7.17 148.0,7.11 148.5,7.06 149.0,7.03 149.5,7.01 150.0,7.00 150.5,7.01 151.0,7.03 151.5,7.06 152.0,7.11 152.5,7.17 153.0,7.24 153.5,7.33 154.0,7.43 154.5,7.55 155.0,7.68 155.5,7.82 156.0,7.97 156.5,8.14 157.0,8.32 157.5,8.52 158.0,8.72 158.5,8.94 159.0,9.18 159.5,9.42 160.0,9.68 160.5,9.95 161.0,10.23 161.5,10.53 162.0,10.83 162.5,11.15 163.0,11.48 163.5,11.83 164.0,12.18 164.5,12.54 165.0,12.92 165.5,13.31 166.0,13.71 166.5,14.11 167.0,14.53 167.5,14.96 168.0,15.40 168.5,15.85 169.0,16.31 169.5,16.78 170.0,17.26 170.5,17.74 171.0,18.24 171.5,18.74 172.0,19.26 172.5,19.78 173.0,20.31 173.5,20.84 174.0,21.39 174.5,21.94 175.0,22.50 175.5,23.07 176.0,23.64 176.5,24.22 177.0,24.80 177.5,25.39 178.0,25.99 178.5,26.59 179.0,27.19 179.5,27.81 180.0,28.42 180.5,29.04 181.0,29.66 181.5,30.29 182.0,30.92 182.5,31.55 183.0,32.19 183.5,32.83 184.0,33.47 184.5,34.11 185.0,34.76 185.5,35.41 186.0,36.05 186.5,36.70 187.0,37.35 187.5,38.00 188.0,38.65 188.5,39.30 189.0,39.95 189.5,40.59 190.0,41.24 190.5,41.89 191.0,42.53 191.5,43.17 192.0,43.81 192.5,44.45 193.0,45.08 193.5,45.71 194.0,46.34 194.5,46.96 195.0,47.58 195.5,48.19 196.0,48.81 196.5,49.41 197.0,50.01 197.5,50.61 198.0,51.20 198.5,51.78 199.0,52.36 199.5,52.93 200.0,53.50 200.5,54.06 201.0,54.61 201.5,55.16 202.0,55.69 202.5,56.22 203.0,56.74 203.5,57.26 204.0,57.76 204.5,58.26 205.0,58.74 205.5,59.22 206.0,59.69 206.5,60.15 207.0,60.60 207.5,61.04 208.0,61.47 208.5,61.89 209.0,62.29 209.5,62.69 210.0,63.08 210.5,63.46 211.0,63.82 211.5,64.17 212.0,64.52 212.5,64.85 213.0,65.17 213.5,65.47 214.0,65.77 214.5,66.05 215.0,66.32 215.5,66.58 216.0,66.82 216.5,67.06 217.0,67.28 217.5,67.48 218.0,67.68 218.5,67.86 219.0,68.03 219.5,68.18 220.0,68.32 220.5,68.45 221.0,68.57 221.5,68.67 222.0,68.76 222.5,68.83 223.0,68.89 223.5,68.94 224.0,68.97 224.5,68.99 225.0,69.00 225.5,68.99 226.0,68.97 226.5,68.94 227.0,68.89 227.5,68.83 228.0,68.76 228.5,68.67 229.0,68.57 229.5,68.45 230.0,68.32 230.5,68.18 231.0,68.03 231.5,67.86 232.0,67.68 232.5,67.48 233.0,67.28 233.5,67.06 234.0,66.82 234.5,66.58 235.0,66.32 235.5,66.05 236.0,65.77 236.5,65.47 237.0,65.17 237.5,64.85 238.0,64.52 238.5,64.17 239.0,63.82 239.5,63.46 240.0,63.08 240.5,62.69 241.0,62.29 241.5,61.89 242.0,61.47 242.5,61.04 243.0,60.60 243.5,60.15 244.0,59.69 244.5,59.22 245.0,58.74 245.5,58.26 246.0,57.76 246.5,57.26 247.0,56.74 247.5,56.22 248.0,55.69 248.5,55.16 249.0,54.61 249.5,54.06 250.0,53.50 250.5,52.93 251.0,52.36 251.5,51.78 252.0,51.20 252.5,50.61 253.0,50.01 253.5,49.41 254.0,48.81 254.5,48.19 255.0,47.58 255.5,46.96 256.0,46.34 256.5,45.71 257.0,45.08 257.5,44.45 258.0,43.81 258.5,43.17 259.0,42.53 259.5,41.89 260.0,41.24 260.5,40.59 261.0,39.95 261.5,39.30 262.0,38.65 262.5,38.00 263.0,37.35 263.5,36.70 264.0,36.05 264.5,35.41 265.0,34.76 265.5,34.11 266.0,33.47 266.5,32.83 267.0,32.19 267.5,31.55 268.0,30.92 268.5,30.29 269.0,29.66 269.5,29.04 270.0,28.42 270.5,27.81 271.0,27.19 271.5,26.59 272.0,25.99 272.5,25.39 273.0,24.80 273.5,24.22 274.0,23.64 274.5,23.07 275.0,22.50 275.5,21.94 276.0,21.39 276.5,20.84 277.0,20.31 277.5,19.78 278.0,19.26 278.5,18.74 279.0,18.24 279.5,17.74 280.0,17.26 280.5,16.78 281.0,16.31 281.5,15.85 282.0,15.40 282.5,14.96 283.0,14.53 283.5,14.11 284.0,13.71 284.5,13.31 285.0,12.92 285.5,12.54 286.0,12.18 286.5,11.83 287.0,11.48 287.5,11.15 288.0,10.83 288.5,10.53 289.0,10.23 289.5,9.95 290.0,9.68 290.5,9.42 291.0,9.18 291.5,8.94 292.0,8.72 292.5,8.52 293.0,8.32 293.5,8.14 294.0,7.97 294.5,7.82 295.0,7.68 295.5,7.55 296.0,7.43 296.5,7.33 297.0,7.24 297.5,7.17 298.0,7.11 298.5,7.06 299.0,7.03 299.5,7.01 300.0,7.00 300.5,7.01 301.0,7.03 301.5,7.06 302.0,7.11 302.5,7.17 303.0,7.24 303.5,7.33 304.0,7.43 304.5,7.55 305.0,7.68 305.5,7.82 306.0,7.97 306.5,8.14 307.0,8.32 307.5,8.52 308.0,8.72 308.5,8.94 309.0,9.18 309.5,9.42 310.0,9.68 310.5,9.95 311.0,10.23 311.5,10.53 312.0,10.83 312.5,11.15 313.0,11.48 313.5,11.83 314.0,12.18 314.5,12.54 315.0,12.92 315.5,13.31 316.0,13.71 316.5,14.11 317.0,14.53 317.5,14.96 318.0,15.40 318.5,15.85 319.0,16.31 319.5,16.78 320.0,17.26 320.5,17.74 321.0,18.24 321.5,18.74 322.0,19.26 322.5,19.78 323.0,20.31 323.5,20.84 324.0,21.39 324.5,21.94 325.0,22.50 325.5,23.07 326.0,23.64 326.5,24.22 327.0,24.80 327.5,25.39 328.0,25.99 328.5,26.59 329.0,27.19 329.5,27.81 330.0,28.42 330.5,29.04 331.0,29.66 331.5,30.29 332.0,30.92 332.5,31.55 333.0,32.19 333.5,32.83 334.0,33.47 334.5,34.11 335.0,34.76 335.5,35.41 336.0,36.05 336.5,36.70 337.0,37.35 337.5,38.00 338.0,38.65 338.5,39.30 339.0,39.95 339.5,40.59 340.0,41.24 340.5,41.89 341.0,42.53 341.5,43.17 342.0,43.81 342.5,44.45 343.0,45.08 343.5,45.71 344.0,46.34 344.5,46.96 345.0,47.58 345.5,48.19 346.0,48.81 346.5,49.41 347.0,50.01 347.5,50.61 348.0,51.20 348.5,51.78 349.0,52.36 349.5,52.93 350.0,53.50 350.5,54.06 351.0,54.61 351.5,55.16 352.0,55.69 352.5,56.22 353.0,56.74 353.5,57.26 354.0,57.76 354.5,58.26 355.0,58.74 355.5,59.22 356.0,59.69 356.5,60.15 357.0,60.60 357.5,61.04 358.0,61.47 358.5,61.89 359.0,62.29 359.5,62.69 360.0,63.08 360.5,63.46 361.0,63.82 361.5,64.17 362.0,64.52 362.5,64.85 363.0,65.17 363.5,65.47 364.0,65.77 364.5,66.05 365.0,66.32 365.5,66.58 366.0,66.82 366.5,67.06 367.0,67.28 367.5,67.48 368.0,67.68 368.5,67.86 369.0,68.03 369.5,68.18 370.0,68.32 370.5,68.45 371.0,68.57 371.5,68.67 372.0,68.76 372.5,68.83 373.0,68.89 373.5,68.94 374.0,68.97 374.5,68.99 375.0,69.00 375.5,68.99 376.0,68.97 376.5,68.94 377.0,68.89 377.5,68.83 378.0,68.76 378.5,68.67 379.0,68.57 379.5,68.45 380.0,68.32 380.5,68.18 381.0,68.03 381.5,67.86 382.0,67.68 382.5,67.48 383.0,67.28 383.5,67.06 384.0,66.82 384.5,66.58 385.0,66.32 385.5,66.05 386.0,65.77 386.5,65.47 387.0,65.17 387.5,64.85 388.0,64.52 388.5,64.17 389.0,63.82 389.5,63.46 390.0,63.08 390.5,62.69 391.0,62.29 391.5,61.89 392.0,61.47 392.5,61.04 393.0,60.60 393.5,60.15 394.0,59.69 394.5,59.22 395.0,58.74 395.5,58.26 396.0,57.76 396.5,57.26 397.0,56.74 397.5,56.22 398.0,55.69 398.5,55.16 399.0,54.61 399.5,54.06 400.0,53.50 400.5,52.93 401.0,52.36 401.5,51.78 402.0,51.20 402.5,50.61 403.0,50.01 403.5,49.41 404.0,48.81 404.5,48.19 405.0,47.58 405.5,46.96 406.0,46.34 406.5,45.71 407.0,45.08 407.5,44.45 408.0,43.81 408.5,43.17 409.0,42.53 409.5,41.89 410.0,41.24 410.5,40.59 411.0,39.95 411.5,39.30 412.0,38.65 412.5,38.00 413.0,37.35 413.5,36.70 414.0,36.05 414.5,35.41 415.0,34.76 415.5,34.11 416.0,33.47 416.5,32.83 417.0,32.19 417.5,31.55 418.0,30.92 418.5,30.29 419.0,29.66 419.5,29.04 420.0,28.42 420.5,27.81 421.0,27.19 421.5,26.59 422.0,25.99 422.5,25.39 423.0,24.80 423.5,24.22 424.0,23.64 424.5,23.07 425.0,22.50 425.5,21.94 426.0,21.39 426.5,20.84 427.0,20.31 427.5,19.78 428.0,19.26 428.5,18.74 429.0,18.24 429.5,17.74 430.0,17.26 430.5,16.78 431.0,16.31 431.5,15.85 432.0,15.40 432.5,14.96 433.0,14.53 433.5,14.11 434.0,13.71 434.5,13.31 435.0,12.92 435.5,12.54 436.0,12.18 436.5,11.83 437.0,11.48 437.5,11.15 438.0,10.83 438.5,10.53 439.0,10.23 439.5,9.95 440.0,9.68 440.5,9.42 441.0,9.18 441.5,8.94 442.0,8.72 442.5,8.52 443.0,8.32 443.5,8.14 444.0,7.97 444.5,7.82 445.0,7.68 445.5,7.55 446.0,7.43 446.5,7.33 447.0,7.24 447.5,7.17 448.0,7.11 448.5,7.06 449.0,7.03 449.5,7.01 450.0,7.00 450.5,7.01 451.0,7.03 451.5,7.06 452.0,7.11 452.5,7.17 453.0,7.24 453.5,7.33 454.0,7.43 454.5,7.55 455.0,7.68 455.5,7.82 456.0,7.97 456.5,8.14 457.0,8.32 457.5,8.52 458.0,8.72" fill="none" stroke="#e6e6e6" stroke-width="1.2"/><rect x="0.5" y="1" width="1" height="1" fill="#c850f0"/><rect x="2.5" y="1" width="1" height="1" fill="#2ecc62"/></svg>
<svg class="a" style="left:14px;top:450px;" width="10" height="10" viewBox="0 0 10 10"><circle cx="5" cy="5" r="4.2" fill="none" stroke="#7a7a7a" stroke-width="1"/></svg>
<div class="t" style="left:30px;top:449.84px;font-size:12px;color:#e2e2e2;">Strength</div>
<svg class="a" style="left:14px;top:472px;" width="10" height="10" viewBox="0 0 10 10"><circle cx="5" cy="5" r="4.2" fill="none" stroke="#7a7a7a" stroke-width="1"/></svg>
<div class="t" style="left:30px;top:471.84px;font-size:12px;color:#e2e2e2;">Strength Fades to Zero</div>
<svg class="a" style="left:14px;top:494px;" width="10" height="10" viewBox="0 0 10 10"><circle cx="5" cy="5" r="4.2" fill="none" stroke="#7a7a7a" stroke-width="1"/></svg>
<div class="t" style="left:30px;top:493.84px;font-size:12px;color:#e2e2e2;">Type</div>
<svg class="a" style="left:14px;top:516px;" width="10" height="10" viewBox="0 0 10 10"><circle cx="5" cy="5" r="4.2" fill="none" stroke="#7a7a7a" stroke-width="1"/></svg>
<div class="t" style="left:30px;top:515.84px;font-size:12px;color:#e2e2e2;">Wave Style</div>
<div class="t" style="left:30px;top:537.84px;font-size:12px;color:#8f8f8f;">Graph</div>
<svg class="a" style="left:14px;top:565px;" width="10" height="10" viewBox="0 0 10 10"><circle cx="5" cy="5" r="4.2" fill="none" stroke="#7a7a7a" stroke-width="1"/></svg>
<div class="t" style="left:30px;top:564.84px;font-size:12px;color:#e2e2e2;">Minimum</div>
<svg class="a" style="left:14px;top:587px;" width="10" height="10" viewBox="0 0 10 10"><circle cx="5" cy="5" r="4.2" fill="none" stroke="#7a7a7a" stroke-width="1"/></svg>
<div class="t" style="left:30px;top:586.84px;font-size:12px;color:#e2e2e2;">Maximum</div>
<svg class="a" style="left:14px;top:609px;" width="10" height="10" viewBox="0 0 10 10"><circle cx="5" cy="5" r="4.2" fill="none" stroke="#7a7a7a" stroke-width="1"/></svg>
<div class="t" style="left:30px;top:608.84px;font-size:12px;color:#e2e2e2;">Value Offset</div>
<svg class="a" style="left:14px;top:631px;" width="10" height="10" viewBox="0 0 10 10"><circle cx="5" cy="5" r="4.2" fill="none" stroke="#7a7a7a" stroke-width="1"/></svg>
<div class="t" style="left:30px;top:630.84px;font-size:12px;color:#e2e2e2;">Stagger</div>
<svg class="a" style="left:14px;top:653px;" width="10" height="10" viewBox="0 0 10 10"><circle cx="5" cy="5" r="4.2" fill="none" stroke="#7a7a7a" stroke-width="1"/></svg>
<div class="t" style="left:30px;top:652.84px;font-size:12px;color:#e2e2e2;">Separate Channels</div>
<svg class="a" style="left:14px;top:680px;" width="10" height="10" viewBox="0 0 10 10"><circle cx="5" cy="5" r="4.2" fill="none" stroke="#7a7a7a" stroke-width="1"/></svg>
<div class="t" style="left:30px;top:679.84px;font-size:12px;color:#e2e2e2;">Time Mode</div>
<svg class="a" style="left:14px;top:702px;" width="10" height="10" viewBox="0 0 10 10"><circle cx="5" cy="5" r="4.2" fill="none" stroke="#7a7a7a" stroke-width="1"/></svg>
<div class="t" style="left:30px;top:701.84px;font-size:12px;color:#e2e2e2;">Frequency</div>
<svg class="a" style="left:14px;top:724px;" width="10" height="10" viewBox="0 0 10 10"><circle cx="5" cy="5" r="4.2" fill="none" stroke="#7a7a7a" stroke-width="1"/></svg>
<div class="t" style="left:30px;top:723.84px;font-size:12px;color:#e2e2e2;">Time</div>
<svg class="a" style="left:14px;top:746px;" width="10" height="10" viewBox="0 0 10 10"><circle cx="5" cy="5" r="4.2" fill="none" stroke="#7a7a7a" stroke-width="1"/></svg>
<div class="t" style="left:30px;top:745.84px;font-size:12px;color:#e2e2e2;">Time Offset</div>
<svg class="a" style="left:14px;top:768px;" width="10" height="10" viewBox="0 0 10 10"><circle cx="5" cy="5" r="4.2" fill="none" stroke="#7a7a7a" stroke-width="1"/></svg>
<div class="t" style="left:30px;top:767.84px;font-size:12px;color:#e2e2e2;">Time Scale</div>
<div class="a" style="left:7px;top:556px;width:467px;height:1px;background:#262626;"></div>
<div class="a" style="left:7px;top:671px;width:467px;height:1px;background:#262626;"></div>
<div class="a" style="left:177px;top:447px;width:94px;height:16px;background:#292929;border-radius:3px"></div>
<div class="t" style="left:181.5px;top:450.69px;font-size:11px;color:#6a6a6a;">%</div>
<div class="t" style="left:194px;top:449.84px;font-size:12px;color:#e6e6e6;">100.0</div>
<div class="a" style="left:177px;top:469px;width:16px;height:16px;background:#292929;border-radius:3px"></div>
<svg class="a" style="left:177px;top:469px;" width="16" height="16" viewBox="0 0 16 16"><path d="M2.5 9 L6 12.5 L13.5 3" fill="none" stroke="#2ecc62" stroke-width="1.8"/></svg>
<div class="a" style="left:177px;top:492px;width:193px;height:14px;background:#555555;border-radius:3px"></div>
<div class="t" style="left:180px;top:493.84px;font-size:12px;color:#e8e8e8;">Cosine</div>
<svg class="a" style="left:357px;top:497px;" width="9" height="6" viewBox="0 0 9 6"><path d="M0.5 0.5 L4.5 4.5 L8.5 0.5" fill="none" stroke="#d0d0d0" stroke-width="1"/></svg>
<div class="a" style="left:177px;top:514px;width:193px;height:14px;background:#555555;border-radius:3px"></div>
<div class="t" style="left:180px;top:515.84px;font-size:12px;color:#e8e8e8;">Normal</div>
<svg class="a" style="left:357px;top:519px;" width="9" height="6" viewBox="0 0 9 6"><path d="M0.5 0.5 L4.5 4.5 L8.5 0.5" fill="none" stroke="#d0d0d0" stroke-width="1"/></svg>
<div class="a" style="left:178px;top:535px;width:16px;height:16px;background:#3c3c3c;border-radius:3px;box-shadow:inset 0 0 0 1px #333"></div>
<svg class="a" style="left:178px;top:535px;" width="16" height="16" viewBox="0 0 16 16"><path d="M3.5 2 V13.5 H14" fill="none" stroke="#cfcfcf" stroke-width="1"/><path d="M4 12 L13 6" stroke="#cfcfcf" stroke-width="1"/></svg>
<div class="a" style="left:153px;top:561px;width:16px;height:17px;background:#292929;border-radius:3px"></div>
<div class="t" style="left:157px;top:563.84px;font-size:12px;color:#e0e0e0;">π</div>
<div class="a" style="left:177px;top:562px;width:94px;height:16px;background:#292929;border-radius:3px"></div>
<div class="t" style="left:181.5px;top:565.69px;font-size:11px;color:#6a6a6a;">#</div>
<div class="t" style="left:194px;top:564.84px;font-size:12px;color:#e0c97a;">-80.0</div>
<div class="a" style="left:261px;top:562px;width:10px;height:16px;background:#333333;border-radius:0 3px 3px 0"></div>
<svg class="a" style="left:250px;top:565px;" width="20" height="10" viewBox="0 0 20 10"><path d="M7.3 2 H3.6 L0.9 5 L3.6 8 H7.3Z" fill="#d8c070"/><path d="M13.1 2 H16.2 L18.8 5 L16.2 8 H13.1Z" fill="#707070"/></svg>
<div class="a" style="left:177px;top:584px;width:94px;height:16px;background:#292929;border-radius:3px"></div>
<div class="t" style="left:181.5px;top:587.69px;font-size:11px;color:#6a6a6a;">#</div>
<div class="t" style="left:194px;top:586.84px;font-size:12px;color:#e0c97a;">400.0</div>
<div class="a" style="left:261px;top:584px;width:10px;height:16px;background:#333333;border-radius:0 3px 3px 0"></div>
<svg class="a" style="left:250px;top:587px;" width="20" height="10" viewBox="0 0 20 10"><path d="M7.3 2 H3.6 L0.9 5 L3.6 8 H7.3Z" fill="#d8c070"/><path d="M13.1 2 H16.2 L18.8 5 L16.2 8 H13.1Z" fill="#707070"/></svg>
<div class="a" style="left:177px;top:606px;width:94px;height:16px;background:#292929;border-radius:3px"></div>
<div class="t" style="left:181.5px;top:609.69px;font-size:11px;color:#6a6a6a;">#</div>
<div class="t" style="left:194px;top:608.84px;font-size:12px;color:#e6e6e6;">0.0</div>
<div class="a" style="left:177px;top:628px;width:94px;height:16px;background:#292929;border-radius:3px"></div>
<div class="t" style="left:181.5px;top:631.69px;font-size:11px;color:#6a6a6a;">#</div>
<div class="t" style="left:194px;top:630.84px;font-size:12px;color:#e6e6e6;">0.0</div>
<div class="a" style="left:177px;top:650px;width:16px;height:16px;background:#292929;border-radius:3px"></div>
<div class="a" style="left:177px;top:678px;width:193px;height:14px;background:#555555;border-radius:3px"></div>
<div class="t" style="left:180px;top:679.84px;font-size:12px;color:#e8e8e8;">Minutes (BPM)</div>
<svg class="a" style="left:357px;top:683px;" width="9" height="6" viewBox="0 0 9 6"><path d="M0.5 0.5 L4.5 4.5 L8.5 0.5" fill="none" stroke="#d0d0d0" stroke-width="1"/></svg>
<div class="a" style="left:177px;top:699px;width:94px;height:16px;background:#292929;border-radius:3px"></div>
<div class="t" style="left:181.5px;top:702.69px;font-size:11px;color:#6a6a6a;">#</div>
<div class="t" style="left:194px;top:701.84px;font-size:12px;color:#e6e6e6;">10.0</div>
<div class="a" style="left:177px;top:721px;width:94px;height:16px;background:#292929;border-radius:3px"></div>
<div class="t" style="left:181.5px;top:724.69px;font-size:11px;color:#6a6a6a;">#</div>
<div class="t" style="left:194px;top:723.84px;font-size:12px;color:#e0c97a;">23.0</div>
<div class="a" style="left:261px;top:721px;width:10px;height:16px;background:#333333;border-radius:0 3px 3px 0"></div>
<svg class="a" style="left:250px;top:724px;" width="20" height="10" viewBox="0 0 20 10"><path d="M7.3 2 H3.6 L0.9 5 L3.6 8 H7.3Z" fill="#d8c070"/><path d="M13.1 2 H16.2 L18.8 5 L16.2 8 H13.1Z" fill="#707070"/></svg>
<div class="a" style="left:273px;top:722px;width:16px;height:16px;background:#292929;border-radius:3px;box-shadow:inset 0 0 0 1px #242424"></div>
<svg class="a" style="left:273px;top:722px;" width="16" height="16" viewBox="0 0 16 16"><path d="M4 4 L12 12 M12 4 L4 12" stroke="#cfcfcf" stroke-width="1"/></svg>
<div class="a" style="left:177px;top:743px;width:94px;height:16px;background:#292929;border-radius:3px"></div>
<div class="t" style="left:181.5px;top:746.69px;font-size:11px;color:#6a6a6a;">S</div>
<div class="t" style="left:194px;top:745.84px;font-size:12px;color:#e6e6e6;">0.0</div>
<div class="a" style="left:177px;top:765px;width:94px;height:16px;background:#292929;border-radius:3px"></div>
<div class="t" style="left:181.5px;top:768.69px;font-size:11px;color:#6a6a6a;">#</div>
<div class="t" style="left:194px;top:767.84px;font-size:12px;color:#e6e6e6;">1.0</div>
<div class="a" style="left:159px;top:482px;width:226px;height:34px;border:3px solid #c0f01c"></div>
<div class="a" style="left:5px;top:622.5px;width:287px;height:27.5px;border:3px solid #c0f01c"></div>
<div class="a" style="left:5px;top:692.5px;width:283.5px;height:29.0px;border:3px solid #c0f01c"></div>
<div class="a" style="left:494px;top:85px;width:30px;height:495px;background:#474747;"></div>
<div class="a" style="left:503.0px;top:89px;width:2px;height:2px;background:#8a8a8a;"></div>
<div class="a" style="left:508.6px;top:89px;width:2px;height:2px;background:#8a8a8a;"></div>
<div class="a" style="left:514.2px;top:89px;width:2px;height:2px;background:#8a8a8a;"></div>
<div class="a" style="left:495px;top:96px;width:28px;height:28px;background:#171717;border-radius:4px"></div>
<svg class="a" style="left:495px;top:96px;" width="28" height="28" viewBox="0 0 28 28"><path d="M10 5.5 L21.5 16 L16.5 16.5 L19 21 L15.5 22.5 L13 18 L10 21.5Z" fill="none" stroke="#2ecc62" stroke-width="1.2" stroke-linejoin="miter"/></svg>
<svg class="a" style="left:494px;top:128px;" width="30" height="24" viewBox="0 0 30 24"><defs><linearGradient id="ig" x1="0" y1="0" x2="0" y2="1"><stop offset="0" stop-color="#f4f4f4"/><stop offset="1" stop-color="#c4c4c4"/></linearGradient></defs><g transform="translate(15,12)"><path d="M-5 -9 L7 3 L-5 7Z" fill="url(#ig)"/></g></svg>
<svg class="a" style="left:494px;top:158px;" width="30" height="24" viewBox="0 0 30 24"><defs><linearGradient id="ig" x1="0" y1="0" x2="0" y2="1"><stop offset="0" stop-color="#f4f4f4"/><stop offset="1" stop-color="#c4c4c4"/></linearGradient></defs><g transform="translate(15,12)"><path d="M-7 -8 L2 -5 L6 2 L3 5 L-4 1Z" fill="url(#ig)"/><path d="M3 5 L6 2 L9 6 L7 8Z" fill="url(#ig)"/><circle cx="-1" cy="-2" r="1.3" fill="#474747"/><path d="M-7 -8 L-1 -2" stroke="#474747" stroke-width="0.8"/></g></svg>
<svg class="a" style="left:494px;top:187px;" width="30" height="24" viewBox="0 0 30 24"><defs><linearGradient id="ig" x1="0" y1="0" x2="0" y2="1"><stop offset="0" stop-color="#f4f4f4"/><stop offset="1" stop-color="#c4c4c4"/></linearGradient></defs><g transform="translate(15,12)"><path d="M-8 9 L-6 4 L6 -8 L9 -5 L-3 7Z" fill="url(#ig)"/></g></svg>
<svg class="a" style="left:494px;top:217px;" width="30" height="24" viewBox="0 0 30 24"><defs><linearGradient id="ig" x1="0" y1="0" x2="0" y2="1"><stop offset="0" stop-color="#f4f4f4"/><stop offset="1" stop-color="#c4c4c4"/></linearGradient></defs><g transform="translate(15,12)"><rect x="-10" y="-4.5" width="13" height="11" rx="1.5" fill="url(#ig)"/><rect x="-8" y="-7" width="6" height="1.2" fill="#ddd"/><path d="M3 1 L10 -4 V7 L3 3Z" fill="url(#ig)"/><circle cx="-6" cy="-1" r="1.2" fill="#444"/></g></svg>
<svg class="a" style="left:494px;top:247px;" width="30" height="24" viewBox="0 0 30 24"><defs><linearGradient id="ig" x1="0" y1="0" x2="0" y2="1"><stop offset="0" stop-color="#f4f4f4"/><stop offset="1" stop-color="#c4c4c4"/></linearGradient></defs><g transform="translate(15,12)"><path d="M-8 9 L8 -7" stroke="#d8d8d8" stroke-width="1.3"/></g></svg>
<svg class="a" style="left:494px;top:277px;" width="30" height="24" viewBox="0 0 30 24"><defs><linearGradient id="ig" x1="0" y1="0" x2="0" y2="1"><stop offset="0" stop-color="#f4f4f4"/><stop offset="1" stop-color="#c4c4c4"/></linearGradient></defs><g transform="translate(15,12)"><path d="M-7 -7 H7 V-3.5 H2 V9 H-2 V-3.5 H-7Z" fill="url(#ig)"/></g></svg>
<svg class="a" style="left:494px;top:308px;" width="30" height="24" viewBox="0 0 30 24"><defs><linearGradient id="ig" x1="0" y1="0" x2="0" y2="1"><stop offset="0" stop-color="#f4f4f4"/><stop offset="1" stop-color="#c4c4c4"/></linearGradient></defs><g transform="translate(15,12)"><path d="M-8 -9 L0 -4 L-4 -3 L-2 2 L-8 2Z" fill="url(#ig)"/><path d="M-8 9 H8 L5 -8 L-1 -7" fill="none" stroke="#d8d8d8" stroke-width="1" stroke-dasharray="2.5 1.5"/><rect x="-9.5" y="7.5" width="3" height="3" fill="#e0e0e0"/><rect x="7" y="7.5" width="3" height="3" fill="#e0e0e0"/><rect x="4" y="-9.5" width="3" height="3" fill="#e0e0e0"/></g></svg>
<svg class="a" style="left:494px;top:338px;" width="30" height="24" viewBox="0 0 30 24"><defs><linearGradient id="ig" x1="0" y1="0" x2="0" y2="1"><stop offset="0" stop-color="#f4f4f4"/><stop offset="1" stop-color="#c4c4c4"/></linearGradient></defs><g transform="translate(15,12)"><rect x="-7" y="-7" width="14" height="14" fill="url(#ig)"/></g></svg>
<svg class="a" style="left:494px;top:368px;" width="30" height="24" viewBox="0 0 30 24"><defs><linearGradient id="ig" x1="0" y1="0" x2="0" y2="1"><stop offset="0" stop-color="#f4f4f4"/><stop offset="1" stop-color="#c4c4c4"/></linearGradient></defs><g transform="translate(15,12)"><circle cx="0" cy="0" r="8" fill="url(#ig)"/></g></svg>
<svg class="a" style="left:494px;top:398px;" width="30" height="24" viewBox="0 0 30 24"><defs><linearGradient id="ig" x1="0" y1="0" x2="0" y2="1"><stop offset="0" stop-color="#f4f4f4"/><stop offset="1" stop-color="#c4c4c4"/></linearGradient></defs><g transform="translate(15,12)"><path d="M0 -9 L9 -2.5 L5.5 8 H-5.5 L-9 -2.5Z" fill="url(#ig)"/></g></svg>
<svg class="a" style="left:494px;top:427px;" width="30" height="24" viewBox="0 0 30 24"><defs><linearGradient id="ig" x1="0" y1="0" x2="0" y2="1"><stop offset="0" stop-color="#f4f4f4"/><stop offset="1" stop-color="#c4c4c4"/></linearGradient></defs><g transform="translate(15,12)"><path d="M0 -9 L2.4 -2.8 L9 -2.8 L3.8 1.2 L5.6 8 L0 4 L-5.6 8 L-3.8 1.2 L-9 -2.8 L-2.4 -2.8Z" fill="url(#ig)"/></g></svg>
<svg class="a" style="left:494px;top:457px;" width="30" height="24" viewBox="0 0 30 24"><defs><linearGradient id="ig" x1="0" y1="0" x2="0" y2="1"><stop offset="0" stop-color="#f4f4f4"/><stop offset="1" stop-color="#c4c4c4"/></linearGradient></defs><g transform="translate(15,12)"><path d="M7 -1 A7.5 7.5 0 1 0 -1 7" fill="none" stroke="url(#ig)" stroke-width="3.5"/></g></svg>
<svg class="a" style="left:494px;top:487px;" width="30" height="24" viewBox="0 0 30 24"><defs><linearGradient id="ig" x1="0" y1="0" x2="0" y2="1"><stop offset="0" stop-color="#f4f4f4"/><stop offset="1" stop-color="#c4c4c4"/></linearGradient></defs><g transform="translate(15,12)"><path d="M0 -9 Q1 -1 9 0 Q1 1 0 9 Q-1 1 -9 0 Q-1 -1 0 -9Z" fill="url(#ig)"/></g></svg>
<svg class="a" style="left:494px;top:517px;" width="30" height="24" viewBox="0 0 30 24"><defs><linearGradient id="ig" x1="0" y1="0" x2="0" y2="1"><stop offset="0" stop-color="#f4f4f4"/><stop offset="1" stop-color="#c4c4c4"/></linearGradient></defs><g transform="translate(15,12)"><path d="M-1.5 -9 H1.5 L2 -6.5 L4.5 -5.5 L6.5 -7 L8.5 -5 L7 -3 L8 -0.5 L9 -0 V1.5 L7.5 2 L6.5 4.5 L7.5 6.5 L5.5 8.5 L3.5 7 L1.5 8 L1 9 H-1.5 L-2 7.5 L-4.5 6.5 L-6.5 8 L-8.5 6 L-7 4 L-8 1.5 L-9 1 V-1.5 L-7.5 -2 L-6.5 -4.5 L-7.5 -6.5 L-5.5 -8.5 L-3.5 -7 L-1.5 -8Z" fill="url(#ig)"/><circle cx="0" cy="0" r="3" fill="#474747"/></g></svg>
<svg class="a" style="left:494px;top:558px;" width="30" height="24" viewBox="0 0 30 24"><defs><linearGradient id="ig" x1="0" y1="0" x2="0" y2="1"><stop offset="0" stop-color="#f4f4f4"/><stop offset="1" stop-color="#c4c4c4"/></linearGradient></defs><g transform="translate(15,12)"><path d="M-6 -4 L-1 1 L-6 6 M0 -4 L5 1 L0 6" fill="none" stroke="#b0b0b0" stroke-width="1.3"/></g></svg>
<div class="a" style="left:530px;top:85px;width:1057px;height:22px;background:#1c1c1c;"></div>
<div class="a" style="left:530px;top:85px;width:87px;height:22px;background:#474747;border-radius:3px 3px 0 0"></div>
<div class="t" style="left:535px;top:90.84px;font-size:12px;color:#e2e2e2;">Composition 4</div>
<div class="a" style="left:530px;top:107px;width:1057px;height:451px;background:#000000;"></div>
<div class="a" style="left:693px;top:127px;width:730px;height:410px;background:#00aeff;"></div>
<div class="a" style="left:1148px;top:302px;width:60px;height:60px;border-radius:50%;background:#ff7150"></div>
<div class="t" style="left:879px;width:600px;text-align:center;top:321.80px;font-size:21.5px;color:#ffffff;">14</div>
<div class="t" style="left:569.5px;top:461.10px;font-size:11.7px;color:#f2f2f2">Hold S <span style="color:#626262;mix-blend-mode:difference">Direct Layer Selection</span></div>
<div class="t" style="left:569.5px;top:475.10px;font-size:11.7px;color:#f2f2f2">Space <span style="color:#626262;mix-blend-mode:difference">Play/ Stop</span></div>
<div class="t" style="left:569.5px;top:489.10px;font-size:11.7px;color:#f2f2f2">Space + click + drag <span style="color:#626262;mix-blend-mode:difference">Pan</span></div>
<div class="t" style="left:569.5px;top:503.10px;font-size:11.7px;color:#f2f2f2">Alt + click + drag <span style="color:#626262;mix-blend-mode:difference">Move Pivot Point</span></div>
<div class="t" style="left:569.5px;top:517.10px;font-size:11.7px;color:#f2f2f2">Shift <span style="color:#626262;mix-blend-mode:difference">Enable Snapping</span></div>
<div class="t" style="left:998px;top:536.67px;font-size:12.2px;color:#f4f4f4;">Viewport Quality: High</div>
<div class="a" style="left:530px;top:558px;width:1057px;height:22px;background:#474747;"></div>
<div class="a" style="left:535px;top:561px;width:78px;height:16px;background:#292929;border-radius:3px"></div>
<div class="t" style="left:538px;top:563.84px;font-size:12px;color:#e8e8e8;">38%</div>
<svg class="a" style="left:599px;top:566px;" width="9" height="6" viewBox="0 0 9 6"><path d="M0.5 0.5 L4.5 4.5 L8.5 0.5" fill="none" stroke="#d0d0d0" stroke-width="1"/></svg>
<div class="a" style="left:866px;top:559px;width:100px;height:20px;background:#292929;border-radius:4px;box-shadow:inset 0 0 0 1px #262626"></div>
<svg class="a" style="left:866px;top:559px;" width="20" height="20" viewBox="0 0 20 20"><rect x="5" y="4" width="1.6" height="12" fill="#dcdcdc"/><path d="M15 4 V16 L7 10Z" fill="#dcdcdc"/></svg>
<svg class="a" style="left:886px;top:559px;" width="20" height="20" viewBox="0 0 20 20"><path d="M12 4 V16 L4 10Z" fill="#dcdcdc"/><rect x="13.5" y="4" width="1.6" height="12" fill="#dcdcdc"/></svg>
<div class="a" style="left:886px;top:560px;width:1px;height:18px;background:#222;"></div>
<svg class="a" style="left:906px;top:559px;" width="20" height="20" viewBox="0 0 20 20"><path d="M6 4 V16 L15 10Z" fill="#dcdcdc"/></svg>
<div class="a" style="left:906px;top:560px;width:1px;height:18px;background:#222;"></div>
<svg class="a" style="left:926px;top:559px;" width="20" height="20" viewBox="0 0 20 20"><rect x="5" y="4" width="1.6" height="12" fill="#dcdcdc"/><path d="M8 4 V16 L16 10Z" fill="#dcdcdc"/></svg>
<div class="a" style="left:926px;top:560px;width:1px;height:18px;background:#222;"></div>
<svg class="a" style="left:946px;top:559px;" width="20" height="20" viewBox="0 0 20 20"><path d="M5 4 V16 L13 10Z" fill="#dcdcdc"/><rect x="13.5" y="4" width="1.6" height="12" fill="#dcdcdc"/></svg>
<div class="a" style="left:946px;top:560px;width:1px;height:18px;background:#222;"></div>
<div class="a" style="left:971px;top:559px;width:20px;height:20px;background:#292929;border-radius:4px;box-shadow:inset 0 0 0 1px #262626"></div>
<svg class="a" style="left:971px;top:559px;" width="20" height="20" viewBox="0 0 20 20"><path d="M5 8 V15 H15 V11" fill="none" stroke="#dcdcdc" stroke-width="1.5"/><path d="M8 11 V9 H14 V6.5 L17 9.5 L14 12.5 V10.5" fill="none" stroke="#dcdcdc" stroke-width="1.2"/></svg>
<div class="a" style="left:1232px;top:559px;width:37px;height:20px;background:#292929;border-radius:4px;box-shadow:inset 0 0 0 1px #262626"></div>
<svg class="a" style="left:1232px;top:559px;" width="37" height="20" viewBox="0 0 37 20"><path d="M3 10 L7 6 H16 V14 H7Z" fill="#dcdcdc"/><circle cx="8" cy="10" r="1.5" fill="#292929"/><text x="26" y="15" font-family="Liberation Sans" font-size="12" fill="#9a9a9a">0</text></svg>
<div class="a" style="left:1272.5px;top:559px;width:31px;height:20px;background:#292929;border-radius:4px;box-shadow:inset 0 0 0 1px #262626"></div>
<svg class="a" style="left:1272.5px;top:559px;" width="31" height="20" viewBox="0 0 31 20"><path d="M3 8 H6 L10 4.5 V15.5 L6 12 H3Z" fill="#2ecc62"/><path d="M12 7 Q14 10 12 13 M14 5 Q17.5 10 14 15" fill="none" stroke="#2ecc62" stroke-width="1.3"/></svg>
<div class="a" style="left:1291.5px;top:560px;width:1px;height:18px;background:#222;"></div>
<svg class="a" style="left:1291.5px;top:559px;" width="12" height="20" viewBox="0 0 12 20"><path d="M3.5 6 L9.0 10 L3.5 14Z" fill="none" stroke="#9a9a9a" stroke-width="0.9"/></svg>
<div class="a" style="left:1307px;top:559px;width:31px;height:20px;background:#292929;border-radius:4px;box-shadow:inset 0 0 0 1px #262626"></div>
<svg class="a" style="left:1307px;top:559px;" width="31" height="20" viewBox="0 0 31 20"><path d="M5 11 A5.5 5.5 0 0 1 15 8 L13.5 14" fill="none" stroke="#dcdcdc" stroke-width="2.3"/></svg>
<div class="a" style="left:1326px;top:560px;width:1px;height:18px;background:#222;"></div>
<svg class="a" style="left:1326px;top:559px;" width="12" height="20" viewBox="0 0 12 20"><path d="M3.5 6 L9.0 10 L3.5 14Z" fill="none" stroke="#9a9a9a" stroke-width="0.9"/></svg>
<div class="a" style="left:1342px;top:559px;width:31px;height:20px;background:#292929;border-radius:4px;box-shadow:inset 0 0 0 1px #262626"></div>
<svg class="a" style="left:1342px;top:559px;" width="31" height="20" viewBox="0 0 31 20"><path d="M7 3 V17 M12 3 V17 M3 7.5 H16 M3 12.5 H16" stroke="#dcdcdc" stroke-width="1.2"/></svg>
<div class="a" style="left:1361px;top:560px;width:1px;height:18px;background:#222;"></div>
<svg class="a" style="left:1361px;top:559px;" width="12" height="20" viewBox="0 0 12 20"><path d="M3.5 6 L9.0 10 L3.5 14Z" fill="none" stroke="#9a9a9a" stroke-width="0.9"/></svg>
<div class="a" style="left:1377.5px;top:559px;width:19.5px;height:20px;background:#292929;border-radius:4px"></div>
<svg class="a" style="left:1377.5px;top:559px;" width="20" height="20" viewBox="0 0 20 20"><rect x="2" y="4" width="3" height="4" fill="#2ecc62"/><rect x="6" y="4" width="11" height="4" fill="none" stroke="#2ecc62" stroke-width="1.3"/><rect x="2" y="10" width="3" height="6" fill="#2ecc62"/><rect x="6" y="10" width="11" height="6" fill="#2ecc62"/></svg>
<div class="a" style="left:1400.5px;top:559px;width:19.5px;height:20px;background:#292929;border-radius:4px;box-shadow:inset 0 0 0 1px #262626"></div>
<svg class="a" style="left:1400.5px;top:559px;" width="19.5" height="20" viewBox="0 0 19.5 20"><path d="M2 5 L6 10 L2 15 M7 5 L11 10 L7 15 M12 5 L16 10 L12 15" fill="none" stroke="#dcdcdc" stroke-width="1.5"/></svg>
<div class="a" style="left:1423px;top:559px;width:31px;height:20px;background:#292929;border-radius:4px;box-shadow:inset 0 0 0 1px #262626"></div>
<svg class="a" style="left:1423px;top:559px;" width="31" height="20" viewBox="0 0 31 20"><rect x="3" y="4" width="14" height="10" fill="none" stroke="#dcdcdc" stroke-width="1.3"/><rect x="3" y="13" width="14" height="2.5" fill="#dcdcdc"/></svg>
<div class="a" style="left:1442px;top:560px;width:1px;height:18px;background:#222;"></div>
<svg class="a" style="left:1442px;top:559px;" width="12" height="20" viewBox="0 0 12 20"><path d="M3.5 6 L9.0 10 L3.5 14Z" fill="none" stroke="#9a9a9a" stroke-width="0.9"/></svg>
<div class="a" style="left:1458px;top:559px;width:31px;height:20px;background:#292929;border-radius:4px;box-shadow:inset 0 0 0 1px #262626"></div>
<svg class="a" style="left:1458px;top:559px;" width="31" height="20" viewBox="0 0 31 20"><rect x="2.5" y="3.5" width="9" height="6" fill="none" stroke="#dcdcdc" stroke-width="1"/><path d="M5 12 H14 V6 M7 14 H16 V8" fill="none" stroke="#dcdcdc" stroke-width="1"/></svg>
<div class="a" style="left:1477px;top:560px;width:1px;height:18px;background:#222;"></div>
<svg class="a" style="left:1477px;top:559px;" width="12" height="20" viewBox="0 0 12 20"><path d="M3.5 6 L9.0 10 L3.5 14Z" fill="none" stroke="#9a9a9a" stroke-width="0.9"/></svg>
<div class="a" style="left:1493px;top:559px;width:31px;height:20px;background:#292929;border-radius:4px;box-shadow:inset 0 0 0 1px #262626"></div>
<svg class="a" style="left:1493px;top:559px;" width="31" height="20" viewBox="0 0 31 20"><rect x="3" y="3" width="9" height="9" fill="#dcdcdc"/><rect x="7.5" y="7.5" width="9" height="9" fill="#292929" stroke="#dcdcdc" stroke-width="1.2"/></svg>
<div class="a" style="left:1512px;top:560px;width:1px;height:18px;background:#222;"></div>
<svg class="a" style="left:1512px;top:559px;" width="12" height="20" viewBox="0 0 12 20"><path d="M3.5 6 L9.0 10 L3.5 14Z" fill="none" stroke="#9a9a9a" stroke-width="0.9"/></svg>
<div class="a" style="left:1528px;top:559px;width:31px;height:20px;background:#292929;border-radius:4px;box-shadow:inset 0 0 0 1px #262626"></div>
<svg class="a" style="left:1528px;top:559px;" width="31" height="20" viewBox="0 0 31 20"><rect x="4" y="4" width="3" height="3" fill="#2ecc62"/><rect x="4" y="10" width="3" height="3" fill="#2ecc62"/><rect x="7" y="7" width="3" height="3" fill="#2ecc62"/><rect x="7" y="13" width="3" height="3" fill="#2ecc62"/><rect x="10" y="4" width="3" height="3" fill="#2ecc62"/><rect x="10" y="10" width="3" height="3" fill="#2ecc62"/><rect x="13" y="7" width="3" height="3" fill="#2ecc62"/><rect x="13" y="13" width="3" height="3" fill="#2ecc62"/></svg>
<div class="a" style="left:1547px;top:560px;width:1px;height:18px;background:#222;"></div>
<svg class="a" style="left:1547px;top:559px;" width="12" height="20" viewBox="0 0 12 20"><path d="M3.5 6 L9.0 10 L3.5 14Z" fill="none" stroke="#9a9a9a" stroke-width="0.9"/></svg>
<div class="a" style="left:1563px;top:559px;width:20px;height:20px;background:#292929;border-radius:4px"></div>
<svg class="a" style="left:1563px;top:559px;" width="20" height="20" viewBox="0 0 20 20"><defs><linearGradient id="ig" x1="0" y1="0" x2="0" y2="1"><stop offset="0" stop-color="#f4f4f4"/><stop offset="1" stop-color="#c4c4c4"/></linearGradient></defs><g transform="translate(10,10) scale(0.95)"><path d="M-1.5 -9 H1.5 L2 -6.5 L4.5 -5.5 L6.5 -7 L8.5 -5 L7 -3 L8 -0.5 L9 -0 V1.5 L7.5 2 L6.5 4.5 L7.5 6.5 L5.5 8.5 L3.5 7 L1.5 8 L1 9 H-1.5 L-2 7.5 L-4.5 6.5 L-6.5 8 L-8.5 6 L-7 4 L-8 1.5 L-9 1 V-1.5 L-7.5 -2 L-6.5 -4.5 L-7.5 -6.5 L-5.5 -8.5 L-3.5 -7 L-1.5 -8Z" fill="#dcdcdc"/><circle cx="0" cy="0" r="3" fill="#292929"/></g></svg>
<div class="a" style="left:1593px;top:85px;width:321px;height:22px;background:#1c1c1c;"></div>
<div class="a" style="left:1593px;top:85px;width:40px;height:22px;background:#474747;border-radius:3px 3px 0 0"></div>
<div class="a" style="left:1634px;top:85px;width:68px;height:22px;background:#232323;border-radius:3px 3px 0 0"></div>
<div class="t" style="left:1598px;top:90.84px;font-size:12px;color:#e2e2e2;">Color</div>
<div class="t" style="left:1639.5px;top:90.84px;font-size:12px;color:#e2e2e2;">Add Layers</div>
<div class="a" style="left:1593px;top:107px;width:321px;height:377px;background:#474747;"></div>
<div class="a" style="left:1593px;top:107px;width:300px;height:160px;overflow:hidden"><div style="position:absolute;left:53px;top:-47px;width:200px;height:200px;border-radius:50%;background:conic-gradient(from 90deg,#ff0000 0deg,#ff00ff 60deg,#0000ff 120deg,#00ffff 180deg,#00ff00 240deg,#ffff00 300deg,#ff0000 360deg);-webkit-mask:radial-gradient(circle,transparent 74.5px,#000 75.5px);mask:radial-gradient(circle,transparent 74.5px,#000 75.5px)"></div></div>
<div class="a" style="left:1702px;top:116px;width:90px;height:90px;background:linear-gradient(to right,#000,rgba(0,0,0,0)),linear-gradient(to bottom,#fff,#2a00ff)"></div>
<svg class="a" style="left:1700px;top:229px;" width="22" height="22" viewBox="0 0 22 22"><circle cx="11" cy="11" r="6" fill="none" stroke="#fff" stroke-width="1.1"/></svg>
<svg class="a" style="left:1781px;top:165px;" width="22" height="22" viewBox="0 0 22 22"><circle cx="11" cy="11" r="6" fill="none" stroke="#fff" stroke-width="1.1"/></svg>
<div class="a" style="left:1900px;top:107px;width:14px;height:377px;background:#2a2a2a;"></div>
<div class="a" style="left:1902px;top:153px;width:10px;height:301px;background:#4f4f4f;border-radius:5px"></div>
<div class="a" style="left:1600px;top:273px;width:21px;height:21px;background:#6755ff;border-radius:3px"></div>
<div class="t" style="left:1625px;top:277.84px;font-size:12px;color:#e6e6e6;">Medium Slateblue</div>
<div class="a" style="left:1871px;top:273px;width:22px;height:22px;background:#292929;border-radius:4px;box-shadow:inset 0 0 0 1px #242424"></div>
<svg class="a" style="left:1871px;top:273px;" width="22" height="22" viewBox="0 0 22 22"><path d="M6 16 L13 9" stroke="#d5d5d5" stroke-width="1.5"/><path d="M12 7 L15 10" stroke="#d5d5d5" stroke-width="3"/><circle cx="15.5" cy="6.5" r="2.2" fill="#d5d5d5"/></svg>
<div class="a" style="left:1600px;top:300.5px;width:49px;height:17px;background:#474747;border-radius:3px;box-shadow:inset 0 0 0 1px #393939"></div>
<div class="t" style="left:1603px;top:303.84px;font-size:12px;color:#e6e6e6;">Hex</div>
<svg class="a" style="left:1636px;top:306px;" width="9" height="6" viewBox="0 0 9 6"><path d="M0.5 0.5 L4.5 4.5 L8.5 0.5" fill="none" stroke="#d0d0d0" stroke-width="1"/></svg>
<div class="a" style="left:1653px;top:299px;width:240px;height:21px;background:#292929;border-radius:3px"></div>
<div class="t" style="left:1657.5px;top:304.69px;font-size:11px;color:#5a5a5a;">#</div>
<div class="t" style="left:1669.5px;top:303.84px;font-size:12px;color:#e6e6e6;">6755ff</div>
<div class="a" style="left:1600px;top:331px;width:236px;height:3px;background:#dcdcdc;border-radius:2px"></div>
<svg class="a" style="left:1828px;top:326px;" width="13" height="13" viewBox="0 0 13 13"><circle cx="6.5" cy="6.5" r="5.5" fill="#6cc4a4"/><circle cx="6.5" cy="6.5" r="1.5" fill="#4a9a80"/></svg>
<div class="a" style="left:1849px;top:324px;width:44px;height:16px;background:#292929;border-radius:3px"></div>
<div class="t" style="left:1853px;top:327.69px;font-size:11px;color:#5a5a5a;">A</div>
<div class="t" style="left:1866px;top:326.84px;font-size:12px;color:#e6e6e6;">255</div>
<div class="a" style="left:1597px;top:347.5px;width:299px;height:20.5px;background:#292929;border-radius:3px 3px 0 0"></div>
<div class="a" style="left:1598px;top:348px;width:149px;height:20px;background:#474747;border-radius:3px 3px 0 0"></div>
<div class="t" style="left:1373px;width:600px;text-align:center;top:351.84px;font-size:12px;color:#e6e6e6;">Swatches</div>
<div class="t" style="left:1520px;width:600px;text-align:center;top:351.84px;font-size:12px;color:#c8c8c8;">Generator</div>
<div class="a" style="left:1598px;top:371.5px;width:257px;height:17px;background:#585858;border-radius:3px"></div>
<div class="a" style="left:1599px;top:372.5px;width:62px;height:15.5px;background:#292929;border-radius:3px"></div>
<svg class="a" style="left:1603px;top:374px;" width="14" height="12" viewBox="0 0 14 12"><rect x="1" y="1" width="1.6" height="10" fill="#2ecc62"/><rect x="4" y="1" width="1.6" height="10" fill="#2ecc62"/><path d="M7 1.5 L10.5 11" stroke="#2ecc62" stroke-width="1.6"/></svg>
<div class="t" style="left:1620px;top:374.84px;font-size:12px;color:#e6e6e6;">Library</div>
<svg class="a" style="left:1669px;top:374px;" width="14" height="12" viewBox="0 0 14 12"><path d="M1 2 H5 L6 3 H12 V11 H1Z" fill="#d0d0d0"/><path d="M3 5 H4.5 M6 5 H10 M3 7.5 H4.5 M6 7.5 H10" stroke="#585858" stroke-width="1"/></svg>
<div class="t" style="left:1686px;top:374.84px;font-size:12px;color:#e6e6e6;">Project</div>
<svg class="a" style="left:1738px;top:373px;" width="12" height="14" viewBox="0 0 12 14"><path d="M1.5 1.5 H7 L10.5 5 V12.5 H1.5Z M7 1.5 V5 H10.5" fill="none" stroke="#d0d0d0" stroke-width="1"/></svg>
<div class="t" style="left:1752px;top:374.84px;font-size:12px;color:#e6e6e6;">Scene</div>
<svg class="a" style="left:1799px;top:373px;" width="14" height="14" viewBox="0 0 14 14"><path d="M7 1.5 A5.5 5.5 0 1 0 12.5 7 L7 12.5" fill="none" stroke="#d0d0d0" stroke-width="1.1"/><path d="M7 1.5 H12.5 V7" fill="none" stroke="#d0d0d0" stroke-width="1.1"/></svg>
<div class="t" style="left:1816px;top:374.84px;font-size:12px;color:#e6e6e6;">Labels</div>
<div class="a" style="left:1858px;top:371.5px;width:17px;height:17px;background:#292929;border-radius:3px"></div>
<svg class="a" style="left:1858px;top:371.5px;" width="17" height="17" viewBox="0 0 17 17"><rect x="4" y="4" width="3.5" height="3.5" fill="#2ecc62"/><rect x="9.5" y="4" width="3.5" height="3.5" fill="#2ecc62"/><rect x="4" y="9.5" width="3.5" height="3.5" fill="#2ecc62"/><rect x="9.5" y="9.5" width="3.5" height="3.5" fill="#2ecc62"/></svg>
<div class="a" style="left:1876px;top:371.5px;width:19px;height:17px;background:#555;border-radius:3px"></div>
<svg class="a" style="left:1876px;top:371.5px;" width="19" height="17" viewBox="0 0 19 17"><path d="M4 4.5 H15 M4 8.5 H15 M4 12.5 H15" stroke="#d8d8d8" stroke-width="1.2"/></svg>
<div class="a" style="left:1598px;top:392.5px;width:275px;height:16.5px;background:#555555;border-radius:3px"></div>
<div class="t" style="left:1601px;top:394.84px;font-size:12px;color:#e6e6e6;">new</div>
<svg class="a" style="left:1859px;top:398px;" width="9" height="6" viewBox="0 0 9 6"><path d="M0.5 0.5 L4.5 4.5 L8.5 0.5" fill="none" stroke="#d0d0d0" stroke-width="1"/></svg>
<div class="a" style="left:1880px;top:400px;width:2.5px;height:2.5px;background:#d0d0d0;border-radius:1px"></div>
<div class="a" style="left:1885px;top:400px;width:2.5px;height:2.5px;background:#d0d0d0;border-radius:1px"></div>
<div class="a" style="left:1890px;top:400px;width:2.5px;height:2.5px;background:#d0d0d0;border-radius:1px"></div>
<div class="a" style="left:1598px;top:409px;width:298px;height:75px;background:#282828;"></div>
<div class="a" style="left:1600px;top:412px;width:18px;height:18px;background:#9b55f5;border-radius:4px"></div>
<div class="a" style="left:1622px;top:412px;width:18px;height:18px;background:#4ba3f8;border-radius:4px"></div>
<div class="a" style="left:1644px;top:412px;width:18px;height:18px;background:#f5734b;border-radius:4px"></div>
<div class="a" style="left:1666px;top:412px;width:18px;height:18px;background:#4cf0a0;border-radius:4px"></div>
<div class="a" style="left:1688px;top:412px;width:18px;height:18px;background:#f54a5c;border-radius:4px"></div>
<div class="a" style="left:1710px;top:412px;width:18px;height:18px;background:#f54ac2;border-radius:4px"></div>
<div class="a" style="left:1732px;top:412px;width:18px;height:18px;background:#f8c84a;border-radius:4px"></div>
<div class="a" style="left:1754px;top:412px;width:18px;height:18px;background:#3b62d8;border-radius:4px"></div>
<div class="a" style="left:1776px;top:412px;width:18px;height:18px;background:#4adcc8;border-radius:4px"></div>
<div class="a" style="left:1798px;top:412px;width:18px;height:18px;background:#d680d8;border-radius:4px"></div>
<div class="a" style="left:1820px;top:412px;width:18px;height:18px;background:#b0e68a;border-radius:4px"></div>
<div class="a" style="left:1842px;top:412px;width:18px;height:18px;background:#6755ff;border-radius:4px"></div>
<div class="a" style="left:1593px;top:490px;width:321px;height:22px;background:#1c1c1c;"></div>
<div class="a" style="left:1593px;top:490px;width:38px;height:22px;background:#474747;border-radius:3px 3px 0 0"></div>
<div class="t" style="left:1598.5px;top:495.84px;font-size:12px;color:#e2e2e2;">Align</div>
<div class="a" style="left:1593px;top:512px;width:321px;height:68px;background:#474747;"></div>
<div class="t" style="left:1601px;top:525.84px;font-size:12px;color:#e6e6e6;">Alignment</div>
<div class="t" style="left:1601px;top:553.84px;font-size:12px;color:#e6e6e6;">Distribution</div>
<div class="a" style="left:1790px;top:523px;width:54px;height:17px;background:#292929;border-radius:4px;box-shadow:inset 0 0 0 1px #1e1e1e"></div>
<svg class="a" style="left:1790px;top:523px;" width="18" height="17" viewBox="0 0 18 17"><path d="M3.5 3 V14" stroke="#dcdcdc" stroke-width="1"/><rect x="5" y="5.5" width="6" height="2" fill="#dcdcdc"/><rect x="5" y="9.5" width="9" height="2" fill="#dcdcdc"/></svg>
<svg class="a" style="left:1808px;top:523px;" width="18" height="17" viewBox="0 0 18 17"><path d="M9 2 V15" stroke="#dcdcdc" stroke-width="1"/><rect x="5" y="5.5" width="8" height="2" fill="#dcdcdc"/><rect x="3" y="9.5" width="12" height="2" fill="#dcdcdc"/></svg>
<div class="a" style="left:1808px;top:523px;width:1px;height:17px;background:#1e1e1e;"></div>
<svg class="a" style="left:1826px;top:523px;" width="18" height="17" viewBox="0 0 18 17"><path d="M14.5 3 V14" stroke="#dcdcdc" stroke-width="1"/><rect x="7" y="5.5" width="6" height="2" fill="#dcdcdc"/><rect x="4" y="9.5" width="9" height="2" fill="#dcdcdc"/></svg>
<div class="a" style="left:1826px;top:523px;width:1px;height:17px;background:#1e1e1e;"></div>
<div class="a" style="left:1852px;top:523px;width:54px;height:17px;background:#292929;border-radius:4px;box-shadow:inset 0 0 0 1px #1e1e1e"></div>
<svg class="a" style="left:1852px;top:523px;" width="18" height="17" viewBox="0 0 18 17"><path d="M2 2.5 H15" stroke="#dcdcdc" stroke-width="1"/><rect x="4.5" y="4" width="2" height="10" fill="#dcdcdc"/><rect x="9" y="4" width="2" height="6" fill="#dcdcdc"/></svg>
<svg class="a" style="left:1870px;top:523px;" width="18" height="17" viewBox="0 0 18 17"><path d="M2 8.5 H16" stroke="#dcdcdc" stroke-width="1"/><rect x="4.5" y="3" width="2" height="11" fill="#dcdcdc"/><rect x="9" y="5.5" width="2" height="6" fill="#dcdcdc"/></svg>
<div class="a" style="left:1870px;top:523px;width:1px;height:17px;background:#1e1e1e;"></div>
<svg class="a" style="left:1888px;top:523px;" width="18" height="17" viewBox="0 0 18 17"><path d="M2 14.5 H16" stroke="#dcdcdc" stroke-width="1"/><rect x="5" y="7" width="2" height="6" fill="#dcdcdc"/><rect x="10" y="2.5" width="2" height="10.5" fill="#dcdcdc"/></svg>
<div class="a" style="left:1888px;top:523px;width:1px;height:17px;background:#1e1e1e;"></div>
<div class="a" style="left:1790px;top:551px;width:54px;height:17px;background:#292929;border-radius:4px;box-shadow:inset 0 0 0 1px #1e1e1e"></div>
<svg class="a" style="left:1790px;top:551px;" width="18" height="17" viewBox="0 0 18 17"><path d="M3.5 3 V14 M14.5 3 V14" stroke="#dcdcdc" stroke-width="1"/><rect x="8" y="5" width="2" height="7" fill="#dcdcdc"/></svg>
<svg class="a" style="left:1808px;top:551px;" width="18" height="17" viewBox="0 0 18 17"><path d="M3 3.5 H15 M3 13.5 H15" stroke="#dcdcdc" stroke-width="1"/><rect x="5" y="7.5" width="8" height="2" fill="#dcdcdc"/></svg>
<div class="a" style="left:1808px;top:551px;width:1px;height:17px;background:#1e1e1e;"></div>
<svg class="a" style="left:1826px;top:551px;" width="18" height="17" viewBox="0 0 18 17"><rect x="4" y="8" width="2" height="4" fill="#dcdcdc"/><rect x="8" y="6" width="2" height="4" fill="#dcdcdc"/><rect x="12" y="4" width="2" height="4" fill="#dcdcdc"/><path d="M1.5 4 V1.5 H4 M14 1.5 H16.5 V4 M1.5 13 V15.5 H4 M14 15.5 H16.5 V13" fill="none" stroke="#dcdcdc" stroke-width="1"/></svg>
<div class="a" style="left:1826px;top:551px;width:1px;height:17px;background:#1e1e1e;"></div>
<div class="a" style="left:494px;top:586px;width:1420px;height:22px;background:#1c1c1c;"></div>
<div class="a" style="left:494px;top:586px;width:89px;height:22px;background:#474747;border-radius:3px 3px 0 0"></div>
<div class="a" style="left:584.5px;top:586px;width:99.5px;height:22px;background:#232323;border-radius:3px 3px 0 0"></div>
<div class="a" style="left:685px;top:586px;width:111px;height:22px;background:#232323;border-radius:3px 3px 0 0"></div>
<div class="t" style="left:499.5px;top:591.84px;font-size:12px;color:#e2e2e2;">Scene Window</div>
<div class="t" style="left:589.5px;top:591.84px;font-size:12px;color:#e2e2e2;">JavaScript Editor</div>
<div class="t" style="left:690.5px;top:591.84px;font-size:12px;color:#e2e2e2;">Dependency Graph</div>
<div class="a" style="left:494px;top:608px;width:1420px;height:22px;background:#262626;"></div>
<div class="t" style="left:365px;width:600px;text-align:center;top:613.84px;font-size:12px;color:#b8b8b8;">Composition 1</div>
<div class="t" style="left:717px;width:600px;text-align:center;top:613.84px;font-size:12px;color:#b8b8b8;">Composition 2</div>
<div class="t" style="left:1070px;width:600px;text-align:center;top:613.84px;font-size:12px;color:#b8b8b8;">Composition 3</div>
<div class="a" style="left:1557px;top:609.5px;width:352px;height:20.5px;background:#474747;border-radius:4px 4px 0 0"></div>
<div class="t" style="left:1422px;width:600px;text-align:center;top:613.84px;font-size:12px;color:#e6e6e6;">Composition 4</div>
<svg class="a" style="left:834px;top:614px;" width="10" height="10" viewBox="0 0 10 10"><path d="M1 1 L9 9 M9 1 L1 9" stroke="#aaaaaa" stroke-width="1"/></svg>
<svg class="a" style="left:1186px;top:614px;" width="10" height="10" viewBox="0 0 10 10"><path d="M1 1 L9 9 M9 1 L1 9" stroke="#aaaaaa" stroke-width="1"/></svg>
<svg class="a" style="left:1538px;top:614px;" width="10" height="10" viewBox="0 0 10 10"><path d="M1 1 L9 9 M9 1 L1 9" stroke="#aaaaaa" stroke-width="1"/></svg>
<svg class="a" style="left:1891px;top:614px;" width="10" height="10" viewBox="0 0 10 10"><path d="M1 1 L9 9 M9 1 L1 9" stroke="#aaaaaa" stroke-width="1"/></svg>
<div class="a" style="left:852px;top:613px;width:1px;height:13px;background:#aaaaaa;"></div>
<div class="a" style="left:1204px;top:613px;width:1px;height:13px;background:#aaaaaa;"></div>
<div class="a" style="left:494px;top:630px;width:465px;height:368px;background:#292929;"></div>
<div class="a" style="left:494px;top:630px;width:465px;height:42px;background:#474747;"></div>
<div class="a" style="left:496px;top:632px;width:254px;height:19.5px;background:#292929;border-radius:10px"></div>
<svg class="a" style="left:499px;top:635px;" width="14" height="14" viewBox="0 0 14 14"><circle cx="5.5" cy="5.5" r="4.3" fill="none" stroke="#d8d8d8" stroke-width="1.1"/><path d="M8.7 8.7 L12 12" stroke="#d8d8d8" stroke-width="1.8"/></svg>
<div class="t" style="left:520px;top:636.84px;font-size:12px;color:#8a8a8a;">Enter a layer name</div>
<div class="a" style="left:753.5px;top:632.5px;width:19px;height:19px;background:#292929;border-radius:4px;box-shadow:inset 0 0 0 1px #242424"></div>
<svg class="a" style="left:753.5px;top:632.5px;" width="19" height="19" viewBox="0 0 19 19"><path d="M9.5 4 V15 M4 9.5 H15" stroke="#e8e8e8" stroke-width="2"/><path d="M15 18 L18 15 V18Z" fill="#6cc4a4"/></svg>
<div class="a" style="left:797.5px;top:632.5px;width:19px;height:19px;background:#292929;border-radius:4px;box-shadow:inset 0 0 0 1px #242424"></div>
<svg class="a" style="left:797.5px;top:632.5px;" width="19" height="19" viewBox="0 0 19 19"><circle cx="11.5" cy="7" r="4" fill="#e0e0e0"/><path d="M5 14 A5 5 0 0 1 8.5 8.5 M4 11 A6 6 0 0 1 6.5 7" fill="none" stroke="#888" stroke-width="1.3"/></svg>
<div class="a" style="left:819.5px;top:632.5px;width:19px;height:19px;background:#292929;border-radius:4px;box-shadow:inset 0 0 0 1px #242424"></div>
<svg class="a" style="left:819.5px;top:632.5px;" width="19" height="19" viewBox="0 0 19 19"><circle cx="5" cy="5" r="1.2" fill="#ddd"/><circle cx="12" cy="5" r="1.2" fill="#ddd"/><circle cx="5" cy="11" r="1.2" fill="#ddd"/><path d="M12 8 L13 11 L16 12 L13 13 L12 16 L11 13 L8 12 L11 11Z" fill="#e8e8e8"/><path d="M15 18 L18 15 V18Z" fill="#6cc4a4"/></svg>
<div class="a" style="left:841.5px;top:632.5px;width:19px;height:19px;background:#292929;border-radius:4px;box-shadow:inset 0 0 0 1px #242424"></div>
<svg class="a" style="left:841.5px;top:632.5px;" width="19" height="19" viewBox="0 0 19 19"><path d="M3 5 H16 M3 9.5 H16 M3 14 H16" stroke="#ddd" stroke-width="1" stroke-dasharray="2 1.5"/><circle cx="8" cy="5" r="1.6" fill="#292929" stroke="#ddd" stroke-width="1"/><circle cx="12" cy="9.5" r="1.6" fill="#292929" stroke="#ddd" stroke-width="1"/><circle cx="8" cy="14" r="1.6" fill="#292929" stroke="#ddd" stroke-width="1"/><path d="M15 18 L18 15 V18Z" fill="#6cc4a4"/></svg>
<div class="a" style="left:863px;top:631.5px;width:94px;height:20px;background:#292929;border-radius:3px"></div>
<div class="t" style="left:867px;top:637.69px;font-size:11px;color:#555555;">F</div>
<div class="t" style="left:880px;top:636.84px;font-size:12px;color:#e6e6e6;">23</div>
<svg class="a" style="left:499px;top:655px;" width="14" height="16" viewBox="0 0 14 16"><path d="M4 7 V5 A3 3 0 0 1 10 5 V7" fill="none" stroke="#cfcfcf" stroke-width="1.3"/><rect x="2.5" y="7" width="9" height="7" fill="#cfcfcf"/><rect x="6.3" y="9.5" width="1.4" height="2" fill="#474747"/></svg>
<svg class="a" style="left:516px;top:656px;" width="16" height="14" viewBox="0 0 16 14"><ellipse cx="8" cy="7" rx="6.5" ry="3.7" fill="none" stroke="#cfcfcf" stroke-width="1"/><circle cx="8" cy="7" r="1.8" fill="#cfcfcf"/></svg>
<svg class="a" style="left:536px;top:655px;" width="14" height="16" viewBox="0 0 14 16"><path d="M7 1.5 L12.5 4.5 V11 L7 14 L1.5 11 V4.5Z M1.5 4.5 L7 7.5 L12.5 4.5 M7 7.5 V14" fill="none" stroke="#cfcfcf" stroke-width="1"/></svg>
<svg class="a" style="left:555px;top:655px;" width="16" height="16" viewBox="0 0 16 16"><path d="M2 6 H5 L9 2.5 V13.5 L5 10 H2Z" fill="#cfcfcf"/><path d="M11 5 Q13 8 11 11 M13 3 Q16.5 8 13 13" fill="none" stroke="#cfcfcf" stroke-width="1.1"/></svg>
<svg class="a" style="left:574px;top:655px;" width="14" height="14" viewBox="0 0 14 14"><path d="M2 12 L8 6" stroke="#cfcfcf" stroke-width="1.3"/><path d="M7 4.5 L9.5 7" stroke="#cfcfcf" stroke-width="3"/><circle cx="10.5" cy="3.5" r="2" fill="#cfcfcf"/></svg>
<svg class="a" style="left:593px;top:657px;" width="15" height="10" viewBox="0 0 15 10"><path d="M1 5 L5 1 H14 V9 H5Z" fill="#cfcfcf"/><circle cx="5.5" cy="5" r="1.5" fill="#474747"/></svg>
<div class="t" style="left:649px;top:656.84px;font-size:12px;color:#eaeaea;">Name</div>
<div class="a" style="left:494px;top:672px;width:451px;height:220px;background:#393939;"></div>
<div class="a" style="left:945px;top:672px;width:14px;height:290px;background:#292929;"></div>
<div class="a" style="left:947px;top:673px;width:10px;height:286px;background:#4f4f4f;border-radius:5px"></div>
<div class="a" style="left:496px;top:964px;width:448px;height:10px;background:#474747;border-radius:5px"></div>
<div class="a" style="left:946px;top:962px;width:13px;height:14px;background:#303030;"></div>
<div class="a" style="left:496px;top:717px;width:447px;height:20px;background:#4d5244;"></div>
<div class="a" style="left:496px;top:674px;width:18px;height:18px;background:#292929;border-radius:3px"></div>
<div class="a" style="left:515px;top:674px;width:18px;height:18px;background:#292929;border-radius:3px"></div>
<svg class="a" style="left:515px;top:674px;" width="18" height="18" viewBox="0 0 18 18"><path d="M14 8.2 A5.2 5.2 0 1 1 11.2 4.3" fill="none" stroke="#d5d5d5" stroke-width="1.1"/><path d="M6.2 8.6 L8.6 11 L14 5" fill="none" stroke="#d5d5d5" stroke-width="1.5"/></svg>
<div class="a" style="left:573px;top:675px;width:16px;height:16px;background:#66dc95;border-radius:3px;box-shadow:0 0 0 1px #1e1e1e"></div>
<svg class="a" style="left:593px;top:679px;" width="15" height="9" viewBox="0 0 15 9"><path d="M1 4.5 L5 0.5 H14 V8.5 H5Z" fill="#d5d5d5"/><circle cx="5.5" cy="4.5" r="1.5" fill="#393939"/></svg>
<div class="a" style="left:610.5px;top:675px;width:31px;height:16px;background:#343434;border-radius:3px"></div>
<svg class="a" style="left:614px;top:680px;" width="9" height="6" viewBox="0 0 9 6"><path d="M0.5 0.5 L4.5 4.5 L8.5 0.5" fill="none" stroke="#8a8a8a" stroke-width="1"/></svg>
<svg class="a" style="left:649px;top:675px;" width="16" height="16" viewBox="0 0 16 16"><rect x="1" y="7" width="8" height="8" fill="#9fd0f8"/><path d="M6 2 H15 M6 5 H15 M6 8 H15" stroke="#ddd" stroke-width="1"/></svg>
<div class="t" style="left:667px;top:677.84px;font-size:12px;color:#e4e4e4;">Color Array</div>
<div class="a" style="left:905px;top:675px;width:21px;height:16px;background:#292929;border-radius:4px"></div>
<svg class="a" style="left:905px;top:675px;" width="21" height="16" viewBox="0 0 21 16"><rect x="10" y="0" width="1" height="16" fill="#363636"/><path d="M8.1 4.9 H4.7 L1.8 7.95 L4.7 11 H8.1Z" fill="#d8c070"/><path d="M12.8 4.9 H16.2 L19.1 7.95 L16.2 11 H12.8Z" fill="#c850f0"/></svg>
<svg class="a" style="left:930px;top:677px;" width="12" height="12" viewBox="0 0 12 12"><circle cx="5.9" cy="5.8" r="4.3" fill="none" stroke="#6e6e6e" stroke-width="1"/></svg>
<div class="a" style="left:496px;top:696px;width:18px;height:18px;background:#292929;border-radius:3px"></div>
<div class="a" style="left:515px;top:696px;width:18px;height:18px;background:#292929;border-radius:3px"></div>
<svg class="a" style="left:515px;top:696px;" width="18" height="18" viewBox="0 0 18 18"><path d="M14 8.2 A5.2 5.2 0 1 1 11.2 4.3" fill="none" stroke="#d5d5d5" stroke-width="1.1"/><path d="M6.2 8.6 L8.6 11 L14 5" fill="none" stroke="#d5d5d5" stroke-width="1.5"/></svg>
<div class="a" style="left:573px;top:697px;width:16px;height:16px;background:#c8ec7c;border-radius:3px;box-shadow:0 0 0 1px #1e1e1e"></div>
<svg class="a" style="left:593px;top:701px;" width="15" height="9" viewBox="0 0 15 9"><path d="M1 4.5 L5 0.5 H14 V8.5 H5Z" fill="#d5d5d5"/><circle cx="5.5" cy="4.5" r="1.5" fill="#393939"/></svg>
<svg class="a" style="left:668px;top:697px;" width="16" height="16" viewBox="0 0 16 16"><path d="M1 2 L4 5 M4 2 L1 5 M2 11 L5 14 M5 11 L2 14 M10 9 L14 13 M14 9 L10 13" stroke="#8fd694" stroke-width="1"/><rect x="11" y="2" width="2.5" height="2.5" fill="#8fd694"/><rect x="6.5" y="7" width="2.5" height="2.5" fill="#8fd694"/></svg>
<div class="t" style="left:686px;top:699.84px;font-size:12px;color:#e4e4e4;">Random [Index]</div>
<div class="a" style="left:905px;top:697px;width:21px;height:16px;background:#292929;border-radius:4px"></div>
<svg class="a" style="left:905px;top:697px;" width="21" height="16" viewBox="0 0 21 16"><rect x="10" y="0" width="1" height="16" fill="#363636"/><path d="M8.1 4.9 H4.7 L1.8 7.95 L4.7 11 H8.1Z" fill="#6e6e6e"/><path d="M12.8 4.9 H16.2 L19.1 7.95 L16.2 11 H12.8Z" fill="#c850f0"/></svg>
<svg class="a" style="left:930px;top:699px;" width="12" height="12" viewBox="0 0 12 12"><circle cx="5.9" cy="5.8" r="4.3" fill="none" stroke="#6e6e6e" stroke-width="1"/></svg>
<div class="a" style="left:496px;top:718px;width:18px;height:18px;background:#292929;border-radius:3px"></div>
<div class="a" style="left:515px;top:718px;width:18px;height:18px;background:#292929;border-radius:3px"></div>
<svg class="a" style="left:515px;top:718px;" width="18" height="18" viewBox="0 0 18 18"><path d="M14 8.2 A5.2 5.2 0 1 1 11.2 4.3" fill="none" stroke="#d5d5d5" stroke-width="1.1"/><path d="M6.2 8.6 L8.6 11 L14 5" fill="none" stroke="#d5d5d5" stroke-width="1.5"/></svg>
<div class="a" style="left:573px;top:719px;width:16px;height:16px;background:#c8ec7c;border-radius:3px;box-shadow:0 0 0 1px #1e1e1e"></div>
<svg class="a" style="left:593px;top:723px;" width="15" height="9" viewBox="0 0 15 9"><path d="M1 4.5 L5 0.5 H14 V8.5 H5Z" fill="#d5d5d5"/><circle cx="5.5" cy="4.5" r="1.5" fill="#393939"/></svg>
<svg class="a" style="left:646px;top:719px;" width="20" height="16" viewBox="0 0 20 16"><polyline points="0.40,10.66 0.65,9.96 0.90,9.22 1.15,8.48 1.40,7.75 1.65,7.08 1.90,6.47 2.15,5.96 2.40,5.56 2.65,5.29 2.90,5.16 3.15,5.18 3.40,5.33 3.65,5.63 3.90,6.05 4.15,6.58 4.40,7.21 4.65,7.90 4.90,8.63 5.15,9.37 5.40,10.10 5.65,10.79 5.90,11.42 6.15,11.95 6.40,12.37 6.65,12.67 6.90,12.82 7.15,12.84 7.40,12.71 7.65,12.44 7.90,12.04 8.15,11.53 8.40,10.92 8.65,10.25 8.90,9.52 9.15,8.78 9.40,8.04 9.65,7.34 9.90,6.70 10.15,6.15 10.40,5.70 10.65,5.38 10.90,5.20 11.15,5.15 11.40,5.25 11.65,5.50 11.90,5.87 12.15,6.36 12.40,6.95 12.65,7.61 12.90,8.33 13.15,9.07 13.40,9.82 13.65,10.52 13.90,11.18 14.15,11.75 14.40,12.22 14.65,12.56 14.90,12.78 15.15,12.85 15.40,12.78 15.65,12.56 15.90,12.22 16.15,11.75 16.40,11.18 16.65,10.52 16.90,9.82 17.15,9.07" fill="none" stroke="#8fd694" stroke-width="1.2" stroke-linecap="round"/></svg>
<div class="t" style="left:667px;top:721.84px;font-size:12px;color:#e4e4e4;">Oscillator [Position.Z] Cosine</div>
<div class="a" style="left:905px;top:719px;width:21px;height:16px;background:#292929;border-radius:4px"></div>
<svg class="a" style="left:905px;top:719px;" width="21" height="16" viewBox="0 0 21 16"><rect x="10" y="0" width="1" height="16" fill="#363636"/><path d="M8.1 4.9 H4.7 L1.8 7.95 L4.7 11 H8.1Z" fill="#d8c070"/><path d="M12.8 4.9 H16.2 L19.1 7.95 L16.2 11 H12.8Z" fill="#c850f0"/></svg>
<svg class="a" style="left:930px;top:721px;" width="12" height="12" viewBox="0 0 12 12"><circle cx="5.9" cy="5.8" r="4.3" fill="none" stroke="#6e6e6e" stroke-width="1"/></svg>
<div class="a" style="left:496px;top:740px;width:18px;height:18px;background:#292929;border-radius:3px"></div>
<div class="a" style="left:515px;top:740px;width:18px;height:18px;background:#292929;border-radius:3px"></div>
<svg class="a" style="left:515px;top:740px;" width="18" height="18" viewBox="0 0 18 18"><path d="M14 8.2 A5.2 5.2 0 1 1 11.2 4.3" fill="none" stroke="#d5d5d5" stroke-width="1.1"/><path d="M6.2 8.6 L8.6 11 L14 5" fill="none" stroke="#d5d5d5" stroke-width="1.5"/></svg>
<div class="a" style="left:573px;top:741px;width:16px;height:16px;background:#c8ec7c;border-radius:3px;box-shadow:0 0 0 1px #1e1e1e"></div>
<svg class="a" style="left:593px;top:745px;" width="15" height="9" viewBox="0 0 15 9"><path d="M1 4.5 L5 0.5 H14 V8.5 H5Z" fill="#d5d5d5"/><circle cx="5.5" cy="4.5" r="1.5" fill="#393939"/></svg>
<svg class="a" style="left:646px;top:741px;" width="20" height="16" viewBox="0 0 20 16"><polyline points="0.40,10.66 0.65,9.96 0.90,9.22 1.15,8.48 1.40,7.75 1.65,7.08 1.90,6.47 2.15,5.96 2.40,5.56 2.65,5.29 2.90,5.16 3.15,5.18 3.40,5.33 3.65,5.63 3.90,6.05 4.15,6.58 4.40,7.21 4.65,7.90 4.90,8.63 5.15,9.37 5.40,10.10 5.65,10.79 5.90,11.42 6.15,11.95 6.40,12.37 6.65,12.67 6.90,12.82 7.15,12.84 7.40,12.71 7.65,12.44 7.90,12.04 8.15,11.53 8.40,10.92 8.65,10.25 8.90,9.52 9.15,8.78 9.40,8.04 9.65,7.34 9.90,6.70 10.15,6.15 10.40,5.70 10.65,5.38 10.90,5.20 11.15,5.15 11.40,5.25 11.65,5.50 11.90,5.87 12.15,6.36 12.40,6.95 12.65,7.61 12.90,8.33 13.15,9.07 13.40,9.82 13.65,10.52 13.90,11.18 14.15,11.75 14.40,12.22 14.65,12.56 14.90,12.78 15.15,12.85 15.40,12.78 15.65,12.56 15.90,12.22 16.15,11.75 16.40,11.18 16.65,10.52 16.90,9.82 17.15,9.07" fill="none" stroke="#8fd694" stroke-width="1.2" stroke-linecap="round"/></svg>
<div class="t" style="left:667px;top:743.84px;font-size:12px;color:#e4e4e4;">Oscillator [Position.X] Sine</div>
<div class="a" style="left:905px;top:741px;width:21px;height:16px;background:#292929;border-radius:4px"></div>
<svg class="a" style="left:905px;top:741px;" width="21" height="16" viewBox="0 0 21 16"><rect x="10" y="0" width="1" height="16" fill="#363636"/><path d="M8.1 4.9 H4.7 L1.8 7.95 L4.7 11 H8.1Z" fill="#d8c070"/><path d="M12.8 4.9 H16.2 L19.1 7.95 L16.2 11 H12.8Z" fill="#c850f0"/></svg>
<svg class="a" style="left:930px;top:743px;" width="12" height="12" viewBox="0 0 12 12"><circle cx="5.9" cy="5.8" r="4.3" fill="none" stroke="#6e6e6e" stroke-width="1"/></svg>
<div class="a" style="left:496px;top:762px;width:18px;height:18px;background:#292929;border-radius:3px"></div>
<div class="a" style="left:515px;top:762px;width:18px;height:18px;background:#292929;border-radius:3px"></div>
<svg class="a" style="left:515px;top:762px;" width="18" height="18" viewBox="0 0 18 18"><path d="M14 8.2 A5.2 5.2 0 1 1 11.2 4.3" fill="none" stroke="#d5d5d5" stroke-width="1.1"/><path d="M6.2 8.6 L8.6 11 L14 5" fill="none" stroke="#d5d5d5" stroke-width="1.5"/></svg>
<div class="a" style="left:573px;top:763px;width:16px;height:16px;background:#c8ec7c;border-radius:3px;box-shadow:0 0 0 1px #1e1e1e"></div>
<svg class="a" style="left:593px;top:767px;" width="15" height="9" viewBox="0 0 15 9"><path d="M1 4.5 L5 0.5 H14 V8.5 H5Z" fill="#d5d5d5"/><circle cx="5.5" cy="4.5" r="1.5" fill="#393939"/></svg>
<svg class="a" style="left:649px;top:763px;" width="16" height="16" viewBox="0 0 16 16"><path d="M2 1 V14 H15" fill="none" stroke="#ddd" stroke-width="1"/><path d="M3 13 L12 4 M8 3 H12.5 V7.5" fill="none" stroke="#ddd" stroke-width="1"/><path d="M11 12 L14 14 L11 16" fill="none" stroke="#8fd694" stroke-width="1"/></svg>
<div class="t" style="left:667px;top:765.84px;font-size:12px;color:#e4e4e4;">3D Matrix [Duplicator]</div>
<div class="a" style="left:905px;top:763px;width:21px;height:16px;background:#292929;border-radius:4px"></div>
<svg class="a" style="left:905px;top:763px;" width="21" height="16" viewBox="0 0 21 16"><rect x="10" y="0" width="1" height="16" fill="#363636"/><path d="M8.1 4.9 H4.7 L1.8 7.95 L4.7 11 H8.1Z" fill="#d8c070"/><path d="M12.8 4.9 H16.2 L19.1 7.95 L16.2 11 H12.8Z" fill="#c850f0"/></svg>
<svg class="a" style="left:930px;top:765px;" width="12" height="12" viewBox="0 0 12 12"><circle cx="5.9" cy="5.8" r="4.3" fill="none" stroke="#6e6e6e" stroke-width="1"/></svg>
<div class="a" style="left:496px;top:784px;width:18px;height:18px;background:#292929;border-radius:3px"></div>
<div class="a" style="left:515px;top:784px;width:18px;height:18px;background:#292929;border-radius:3px"></div>
<div class="a" style="left:534px;top:784px;width:18px;height:18px;background:#292929;border-radius:3px"></div>
<svg class="a" style="left:515px;top:784px;" width="18" height="18" viewBox="0 0 18 18"><ellipse cx="9" cy="9" rx="6.5" ry="3.7" fill="none" stroke="#d5d5d5" stroke-width="1"/><circle cx="9" cy="9" r="1.8" fill="#d5d5d5"/></svg>
<div class="a" style="left:573px;top:785px;width:16px;height:16px;background:#fde47c;border-radius:3px;box-shadow:0 0 0 1px #1e1e1e"></div>
<svg class="a" style="left:593px;top:789px;" width="15" height="9" viewBox="0 0 15 9"><path d="M1 4.5 L5 0.5 H14 V8.5 H5Z" fill="#d5d5d5"/><circle cx="5.5" cy="4.5" r="1.5" fill="#393939"/></svg>
<svg class="a" style="left:649px;top:785px;" width="16" height="16" viewBox="0 0 16 16"><rect x="1.0" y="1.0" width="2" height="2" fill="#fde47c"/><rect x="1.0" y="6.5" width="2" height="2" fill="#fde47c"/><rect x="1.0" y="12.0" width="2" height="2" fill="#fde47c"/><rect x="6.5" y="1.0" width="2" height="2" fill="#fde47c"/><rect x="6.5" y="6.5" width="2" height="2" fill="#fde47c"/><rect x="6.5" y="12.0" width="2" height="2" fill="#fde47c"/><rect x="12.0" y="1.0" width="2" height="2" fill="#fde47c"/><rect x="12.0" y="6.5" width="2" height="2" fill="#fde47c"/><rect x="12.0" y="12.0" width="2" height="2" fill="#fde47c"/></svg>
<div class="t" style="left:667px;top:787.84px;font-size:12px;color:#e4e4e4;">Duplicator</div>
<div class="a" style="left:905px;top:785px;width:21px;height:16px;background:#292929;border-radius:4px"></div>
<svg class="a" style="left:905px;top:785px;" width="21" height="16" viewBox="0 0 21 16"><rect x="10" y="0" width="1" height="16" fill="#363636"/><path d="M8.1 4.9 H4.7 L1.8 7.95 L4.7 11 H8.1Z" fill="#d8c070"/><path d="M12.8 4.9 H16.2 L19.1 7.95 L16.2 11 H12.8Z" fill="#6e6e6e"/></svg>
<svg class="a" style="left:930px;top:787px;" width="12" height="12" viewBox="0 0 12 12"><circle cx="5.9" cy="5.8" r="4.3" fill="none" stroke="#6e6e6e" stroke-width="1"/></svg>
<div class="a" style="left:496px;top:806px;width:18px;height:18px;background:#292929;border-radius:3px"></div>
<div class="a" style="left:515px;top:806px;width:18px;height:18px;background:#292929;border-radius:3px"></div>
<div class="a" style="left:534px;top:806px;width:18px;height:18px;background:#292929;border-radius:3px"></div>
<div class="a" style="left:573px;top:807px;width:16px;height:16px;background:#fde47c;border-radius:3px;box-shadow:0 0 0 1px #1e1e1e"></div>
<svg class="a" style="left:593px;top:811px;" width="15" height="9" viewBox="0 0 15 9"><path d="M1 4.5 L5 0.5 H14 V8.5 H5Z" fill="#d5d5d5"/><circle cx="5.5" cy="4.5" r="1.5" fill="#393939"/></svg>
<div class="a" style="left:610.5px;top:807px;width:31px;height:16px;background:#343434;border-radius:3px"></div>
<svg class="a" style="left:614px;top:812px;" width="9" height="6" viewBox="0 0 9 6"><path d="M0.5 0.5 L4.5 4.5 L8.5 0.5" fill="none" stroke="#8a8a8a" stroke-width="1"/></svg>
<svg class="a" style="left:649px;top:807px;" width="16" height="16" viewBox="0 0 16 16"><rect x="1.5" y="1.5" width="13" height="13" fill="none" stroke="#fde47c" stroke-width="1.2" stroke-dasharray="3 2"/></svg>
<div class="t" style="left:667px;top:809.84px;font-size:12px;color:#9a9a9a;">Ellipse Shape</div>
<div class="a" style="left:905px;top:807px;width:21px;height:16px;background:#292929;border-radius:4px"></div>
<svg class="a" style="left:905px;top:807px;" width="21" height="16" viewBox="0 0 21 16"><rect x="10" y="0" width="1" height="16" fill="#363636"/><path d="M8.1 4.9 H4.7 L1.8 7.95 L4.7 11 H8.1Z" fill="#d8c070"/><path d="M12.8 4.9 H16.2 L19.1 7.95 L16.2 11 H12.8Z" fill="#c850f0"/></svg>
<svg class="a" style="left:930px;top:809px;" width="12" height="12" viewBox="0 0 12 12"><circle cx="5.9" cy="5.8" r="4.3" fill="none" stroke="#6e6e6e" stroke-width="1"/></svg>
<div class="a" style="left:496px;top:828px;width:18px;height:18px;background:#292929;border-radius:3px"></div>
<div class="a" style="left:515px;top:828px;width:18px;height:18px;background:#292929;border-radius:3px"></div>
<svg class="a" style="left:515px;top:828px;" width="18" height="18" viewBox="0 0 18 18"><path d="M14 8.2 A5.2 5.2 0 1 1 11.2 4.3" fill="none" stroke="#d5d5d5" stroke-width="1.1"/><path d="M6.2 8.6 L8.6 11 L14 5" fill="none" stroke="#d5d5d5" stroke-width="1.5"/></svg>
<div class="a" style="left:573px;top:829px;width:16px;height:16px;background:#5b8ae6;border-radius:3px;box-shadow:0 0 0 1px #1e1e1e"></div>
<svg class="a" style="left:593px;top:833px;" width="15" height="9" viewBox="0 0 15 9"><path d="M1 4.5 L5 0.5 H14 V8.5 H5Z" fill="#d5d5d5"/><circle cx="5.5" cy="4.5" r="1.5" fill="#393939"/></svg>
<svg class="a" style="left:668px;top:829px;" width="18" height="18" viewBox="0 0 18 18"><path d="M1 5 H7 V16 H1Z M8 7 L13 7 V16 H8Z" fill="#9fd0f8"/><rect x="3" y="9" width="1.5" height="5" fill="#5a7a9a"/><path d="M14 1 L14.7 3 L16.5 3.5 L14.7 4 L14 6 L13.3 4 L11.5 3.5 L13.3 3Z" fill="#eee"/></svg>
<div class="t" style="left:686px;top:831.84px;font-size:12px;color:#e4e4e4;">Index Context [Number]</div>
<div class="a" style="left:905px;top:829px;width:21px;height:16px;background:#292929;border-radius:4px"></div>
<svg class="a" style="left:905px;top:829px;" width="21" height="16" viewBox="0 0 21 16"><rect x="10" y="0" width="1" height="16" fill="#363636"/><path d="M8.1 4.9 H4.7 L1.8 7.95 L4.7 11 H8.1Z" fill="#6e6e6e"/><path d="M12.8 4.9 H16.2 L19.1 7.95 L16.2 11 H12.8Z" fill="#c850f0"/></svg>
<svg class="a" style="left:930px;top:831px;" width="12" height="12" viewBox="0 0 12 12"><circle cx="5.9" cy="5.8" r="4.3" fill="none" stroke="#6e6e6e" stroke-width="1"/></svg>
<div class="a" style="left:496px;top:850px;width:18px;height:18px;background:#292929;border-radius:3px"></div>
<div class="a" style="left:515px;top:850px;width:18px;height:18px;background:#292929;border-radius:3px"></div>
<svg class="a" style="left:515px;top:850px;" width="18" height="18" viewBox="0 0 18 18"><path d="M14 8.2 A5.2 5.2 0 1 1 11.2 4.3" fill="none" stroke="#d5d5d5" stroke-width="1.1"/><path d="M6.2 8.6 L8.6 11 L14 5" fill="none" stroke="#d5d5d5" stroke-width="1.5"/></svg>
<div class="a" style="left:573px;top:851px;width:16px;height:16px;background:#5b8ae6;border-radius:3px;box-shadow:0 0 0 1px #1e1e1e"></div>
<svg class="a" style="left:593px;top:855px;" width="15" height="9" viewBox="0 0 15 9"><path d="M1 4.5 L5 0.5 H14 V8.5 H5Z" fill="#d5d5d5"/><circle cx="5.5" cy="4.5" r="1.5" fill="#393939"/></svg>
<svg class="a" style="left:668px;top:851px;" width="16" height="16" viewBox="0 0 16 16"><text x="0" y="10" font-family="Liberation Sans" font-size="9" fill="#ddd">abc</text><path d="M0 12.5 H16" stroke="#ddd" stroke-width="1" stroke-dasharray="3 1"/></svg>
<div class="t" style="left:686px;top:853.84px;font-size:12px;color:#e4e4e4;">String Generator [String]</div>
<div class="a" style="left:905px;top:851px;width:21px;height:16px;background:#292929;border-radius:4px"></div>
<svg class="a" style="left:905px;top:851px;" width="21" height="16" viewBox="0 0 21 16"><rect x="10" y="0" width="1" height="16" fill="#363636"/><path d="M8.1 4.9 H4.7 L1.8 7.95 L4.7 11 H8.1Z" fill="#d8c070"/><path d="M12.8 4.9 H16.2 L19.1 7.95 L16.2 11 H12.8Z" fill="#c850f0"/></svg>
<svg class="a" style="left:930px;top:853px;" width="12" height="12" viewBox="0 0 12 12"><circle cx="5.9" cy="5.8" r="4.3" fill="none" stroke="#6e6e6e" stroke-width="1"/></svg>
<div class="a" style="left:496px;top:872px;width:18px;height:18px;background:#292929;border-radius:3px"></div>
<div class="a" style="left:515px;top:872px;width:18px;height:18px;background:#292929;border-radius:3px"></div>
<div class="a" style="left:534px;top:872px;width:18px;height:18px;background:#292929;border-radius:3px"></div>
<svg class="a" style="left:515px;top:872px;" width="18" height="18" viewBox="0 0 18 18"><ellipse cx="9" cy="9" rx="6.5" ry="3.7" fill="none" stroke="#5a5a5a" stroke-width="1"/><circle cx="9" cy="9" r="1.8" fill="#5a5a5a"/></svg>
<div class="a" style="left:573px;top:873px;width:16px;height:16px;background:#b98af8;border-radius:3px;box-shadow:0 0 0 1px #1e1e1e"></div>
<svg class="a" style="left:593px;top:877px;" width="15" height="9" viewBox="0 0 15 9"><path d="M1 4.5 L5 0.5 H14 V8.5 H5Z" fill="#d5d5d5"/><circle cx="5.5" cy="4.5" r="1.5" fill="#393939"/></svg>
<svg class="a" style="left:668px;top:873px;" width="17" height="17" viewBox="0 0 17 17"><rect x="1.5" y="1.5" width="14" height="14" fill="none" stroke="#ddd" stroke-width="1" stroke-dasharray="2 1.5"/><path d="M4.5 4.5 H12.5 V6.5 H9.5 V13 H7.5 V6.5 H4.5Z" fill="#fde47c"/></svg>
<div class="t" style="left:686px;top:875.84px;font-size:12px;color:#9a9a9a;">Cavalry</div>
<div class="a" style="left:905px;top:873px;width:21px;height:16px;background:#292929;border-radius:4px"></div>
<svg class="a" style="left:905px;top:873px;" width="21" height="16" viewBox="0 0 21 16"><rect x="10" y="0" width="1" height="16" fill="#363636"/><path d="M8.1 4.9 H4.7 L1.8 7.95 L4.7 11 H8.1Z" fill="#d8c070"/><path d="M12.8 4.9 H16.2 L19.1 7.95 L16.2 11 H12.8Z" fill="#6e6e6e"/></svg>
<svg class="a" style="left:930px;top:875px;" width="12" height="12" viewBox="0 0 12 12"><circle cx="5.9" cy="5.8" r="4.3" fill="none" stroke="#6e6e6e" stroke-width="1"/></svg>
<div class="a" style="left:916px;top:741px;width:10px;height:17px;border:1px solid #a050c0;border-radius:2px"></div>
<div class="a" style="left:905px;top:763px;width:11px;height:17px;border:1px solid #a89050;border-radius:2px"></div>
<div class="a" style="left:620px;top:715px;width:277px;height:26px;border:3px solid #c0f01c"></div>
<div class="a" style="left:494px;top:976px;width:465px;height:22px;background:#474747;"></div>
<div class="a" style="left:497.5px;top:977.5px;width:19px;height:19px;background:#292929;border-radius:4px;box-shadow:inset 0 0 0 1px #222"></div>
<svg class="a" style="left:497.5px;top:977.5px;" width="19" height="19" viewBox="0 0 19 19"><path d="M3 9.5 L7 5.5 H16 V13.5 H7Z" fill="#d5d5d5"/><circle cx="7.5" cy="9.5" r="1.5" fill="#292929"/></svg>
<div class="t" style="left:520px;top:981.84px;font-size:12px;color:#e6e6e6;">1 selected</div>
<div class="a" style="left:750.5px;top:977px;width:19px;height:19.5px;background:#292929;border-radius:4px;box-shadow:inset 0 0 0 1px #222"></div>
<svg class="a" style="left:750.5px;top:977px;" width="19" height="19" viewBox="0 0 19 19"><rect x="4" y="4" width="11" height="11" fill="none" stroke="#d5d5d5" stroke-width="1.2"/><circle cx="9.5" cy="9.5" r="1.8" fill="#d5d5d5"/></svg>
<div class="a" style="left:773px;top:978px;width:183px;height:18px;background:#555555;border-radius:4px"></div>
<div class="a" style="left:774px;top:979px;width:86px;height:16px;background:#292929;border-radius:4px"></div>
<svg class="a" style="left:778px;top:980px;" width="14" height="14" viewBox="0 0 14 14"><path d="M3.5 3 H13 M1.5 7.3 H11 M3.5 11.6 H13" stroke="#2ecc62" stroke-width="2"/></svg>
<div class="t" style="left:795px;top:981.84px;font-size:12px;color:#e8e8e8;">Time Editor</div>
<svg class="a" style="left:867px;top:979px;" width="16" height="16" viewBox="0 0 16 16"><path d="M2.5 1 V14 H15" fill="none" stroke="#cfcfcf" stroke-width="1"/><path d="M3 13 L13 6" stroke="#cfcfcf" stroke-width="1"/></svg>
<div class="t" style="left:885px;top:981.84px;font-size:12px;color:#e8e8e8;">Graph Editor</div>
<div class="a" style="left:957px;top:672px;width:6px;height:326px;background:#262626;"></div>
<div class="a" style="left:959px;top:630px;width:4px;height:42px;background:#1e1e1e;"></div>
<div class="a" style="left:963px;top:630px;width:3px;height:368px;background:#1c1c1c;"></div>
<div class="a" style="left:961px;top:807px;width:2px;height:2px;background:#8a8a8a;"></div>
<div class="a" style="left:961px;top:810px;width:2px;height:2px;background:#8a8a8a;"></div>
<div class="a" style="left:961px;top:813px;width:2px;height:2px;background:#8a8a8a;"></div>
<div class="a" style="left:961px;top:816px;width:2px;height:2px;background:#8a8a8a;"></div>
<div class="a" style="left:961px;top:819px;width:2px;height:2px;background:#8a8a8a;"></div>
<div class="a" style="left:961px;top:822px;width:2px;height:2px;background:#8a8a8a;"></div>
<div class="a" style="left:966px;top:630px;width:948px;height:368px;background:#292929;"></div>
<div class="a" style="left:966px;top:630px;width:948px;height:24px;background:#222222;"></div>
<svg class="a" style="left:966px;top:630px;" width="948" height="24" viewBox="0 0 948 24"><rect x="8.40" y="16" width="1.2" height="8" fill="#9a9a9a"/><rect x="19.56" y="20" width="1.2" height="4" fill="#8a8a8a"/><rect x="30.72" y="20" width="1.2" height="4" fill="#8a8a8a"/><rect x="41.88" y="20" width="1.2" height="4" fill="#8a8a8a"/><rect x="53.04" y="20" width="1.2" height="4" fill="#8a8a8a"/><rect x="64.20" y="16" width="1.2" height="8" fill="#9a9a9a"/><rect x="75.36" y="20" width="1.2" height="4" fill="#8a8a8a"/><rect x="86.52" y="20" width="1.2" height="4" fill="#8a8a8a"/><rect x="97.68" y="20" width="1.2" height="4" fill="#8a8a8a"/><rect x="108.84" y="20" width="1.2" height="4" fill="#8a8a8a"/><rect x="120.00" y="16" width="1.2" height="8" fill="#9a9a9a"/><rect x="131.16" y="20" width="1.2" height="4" fill="#8a8a8a"/><rect x="142.32" y="20" width="1.2" height="4" fill="#8a8a8a"/><rect x="153.48" y="20" width="1.2" height="4" fill="#8a8a8a"/><rect x="164.64" y="20" width="1.2" height="4" fill="#8a8a8a"/><rect x="175.80" y="16" width="1.2" height="8" fill="#9a9a9a"/><rect x="186.96" y="20" width="1.2" height="4" fill="#8a8a8a"/><rect x="198.12" y="20" width="1.2" height="4" fill="#8a8a8a"/><rect x="209.28" y="20" width="1.2" height="4" fill="#8a8a8a"/><rect x="220.44" y="20" width="1.2" height="4" fill="#8a8a8a"/><rect x="231.60" y="16" width="1.2" height="8" fill="#9a9a9a"/><rect x="242.76" y="20" width="1.2" height="4" fill="#8a8a8a"/><rect x="253.92" y="20" width="1.2" height="4" fill="#8a8a8a"/><rect x="265.08" y="20" width="1.2" height="4" fill="#8a8a8a"/><rect x="276.24" y="20" width="1.2" height="4" fill="#8a8a8a"/><rect x="287.40" y="16" width="1.2" height="8" fill="#9a9a9a"/><rect x="298.56" y="20" width="1.2" height="4" fill="#8a8a8a"/><rect x="309.72" y="20" width="1.2" height="4" fill="#8a8a8a"/><rect x="320.88" y="20" width="1.2" height="4" fill="#8a8a8a"/><rect x="332.04" y="20" width="1.2" height="4" fill="#8a8a8a"/><rect x="343.20" y="16" width="1.2" height="8" fill="#9a9a9a"/><rect x="354.36" y="20" width="1.2" height="4" fill="#8a8a8a"/><rect x="365.52" y="20" width="1.2" height="4" fill="#8a8a8a"/><rect x="376.68" y="20" width="1.2" height="4" fill="#8a8a8a"/><rect x="387.84" y="20" width="1.2" height="4" fill="#8a8a8a"/><rect x="399.00" y="16" width="1.2" height="8" fill="#9a9a9a"/><rect x="410.16" y="20" width="1.2" height="4" fill="#8a8a8a"/><rect x="421.32" y="20" width="1.2" height="4" fill="#8a8a8a"/><rect x="432.48" y="20" width="1.2" height="4" fill="#8a8a8a"/><rect x="443.64" y="20" width="1.2" height="4" fill="#8a8a8a"/><rect x="454.80" y="16" width="1.2" height="8" fill="#9a9a9a"/><rect x="465.96" y="20" width="1.2" height="4" fill="#8a8a8a"/><rect x="477.12" y="20" width="1.2" height="4" fill="#8a8a8a"/><rect x="488.28" y="20" width="1.2" height="4" fill="#8a8a8a"/><rect x="499.44" y="20" width="1.2" height="4" fill="#8a8a8a"/><rect x="510.60" y="16" width="1.2" height="8" fill="#9a9a9a"/><rect x="521.76" y="20" width="1.2" height="4" fill="#8a8a8a"/><rect x="532.92" y="20" width="1.2" height="4" fill="#8a8a8a"/><rect x="544.08" y="20" width="1.2" height="4" fill="#8a8a8a"/><rect x="555.24" y="20" width="1.2" height="4" fill="#8a8a8a"/><rect x="566.40" y="16" width="1.2" height="8" fill="#9a9a9a"/><rect x="577.56" y="20" width="1.2" height="4" fill="#8a8a8a"/><rect x="588.72" y="20" width="1.2" height="4" fill="#8a8a8a"/><rect x="599.88" y="20" width="1.2" height="4" fill="#8a8a8a"/><rect x="611.04" y="20" width="1.2" height="4" fill="#8a8a8a"/><rect x="622.20" y="16" width="1.2" height="8" fill="#9a9a9a"/><rect x="633.36" y="20" width="1.2" height="4" fill="#8a8a8a"/><rect x="644.52" y="20" width="1.2" height="4" fill="#8a8a8a"/><rect x="655.68" y="20" width="1.2" height="4" fill="#8a8a8a"/><rect x="666.84" y="20" width="1.2" height="4" fill="#8a8a8a"/><rect x="678.00" y="16" width="1.2" height="8" fill="#9a9a9a"/><rect x="689.16" y="20" width="1.2" height="4" fill="#8a8a8a"/><rect x="700.32" y="20" width="1.2" height="4" fill="#8a8a8a"/><rect x="711.48" y="20" width="1.2" height="4" fill="#8a8a8a"/><rect x="722.64" y="20" width="1.2" height="4" fill="#8a8a8a"/><rect x="733.80" y="16" width="1.2" height="8" fill="#9a9a9a"/><rect x="744.96" y="20" width="1.2" height="4" fill="#8a8a8a"/><rect x="756.12" y="20" width="1.2" height="4" fill="#8a8a8a"/><rect x="767.28" y="20" width="1.2" height="4" fill="#8a8a8a"/><rect x="778.44" y="20" width="1.2" height="4" fill="#8a8a8a"/><rect x="789.60" y="16" width="1.2" height="8" fill="#9a9a9a"/><rect x="800.76" y="20" width="1.2" height="4" fill="#8a8a8a"/><rect x="811.92" y="20" width="1.2" height="4" fill="#8a8a8a"/><rect x="823.08" y="20" width="1.2" height="4" fill="#8a8a8a"/><rect x="834.24" y="20" width="1.2" height="4" fill="#8a8a8a"/><rect x="845.40" y="16" width="1.2" height="8" fill="#9a9a9a"/><rect x="856.56" y="20" width="1.2" height="4" fill="#8a8a8a"/><rect x="867.72" y="20" width="1.2" height="4" fill="#8a8a8a"/><rect x="878.88" y="20" width="1.2" height="4" fill="#8a8a8a"/><rect x="890.04" y="20" width="1.2" height="4" fill="#8a8a8a"/><rect x="901.20" y="16" width="1.2" height="8" fill="#9a9a9a"/><rect x="912.36" y="20" width="1.2" height="4" fill="#8a8a8a"/><rect x="923.52" y="20" width="1.2" height="4" fill="#8a8a8a"/></svg>
<div class="t" style="left:675.0px;width:600px;text-align:center;top:632.84px;font-size:12px;color:#d8d8d8;">0</div>
<div class="t" style="left:730.8px;width:600px;text-align:center;top:632.84px;font-size:12px;color:#d8d8d8;">15</div>
<div class="t" style="left:786.5999999999999px;width:600px;text-align:center;top:632.84px;font-size:12px;color:#d8d8d8;">30</div>
<div class="t" style="left:842.4000000000001px;width:600px;text-align:center;top:632.84px;font-size:12px;color:#d8d8d8;">45</div>
<div class="t" style="left:898.2px;width:600px;text-align:center;top:632.84px;font-size:12px;color:#d8d8d8;">60</div>
<div class="t" style="left:954.0px;width:600px;text-align:center;top:632.84px;font-size:12px;color:#d8d8d8;">75</div>
<div class="t" style="left:1009.8px;width:600px;text-align:center;top:632.84px;font-size:12px;color:#d8d8d8;">90</div>
<div class="t" style="left:1065.6px;width:600px;text-align:center;top:632.84px;font-size:12px;color:#d8d8d8;">105</div>
<div class="t" style="left:1121.4px;width:600px;text-align:center;top:632.84px;font-size:12px;color:#d8d8d8;">120</div>
<div class="t" style="left:1177.2px;width:600px;text-align:center;top:632.84px;font-size:12px;color:#d8d8d8;">135</div>
<div class="t" style="left:1233.0px;width:600px;text-align:center;top:632.84px;font-size:12px;color:#d8d8d8;">150</div>
<div class="t" style="left:1288.8000000000002px;width:600px;text-align:center;top:632.84px;font-size:12px;color:#d8d8d8;">165</div>
<div class="t" style="left:1344.6px;width:600px;text-align:center;top:632.84px;font-size:12px;color:#d8d8d8;">180</div>
<div class="t" style="left:1400.4px;width:600px;text-align:center;top:632.84px;font-size:12px;color:#d8d8d8;">195</div>
<div class="t" style="left:1456.2px;width:600px;text-align:center;top:632.84px;font-size:12px;color:#d8d8d8;">210</div>
<div class="t" style="left:1512.0px;width:600px;text-align:center;top:632.84px;font-size:12px;color:#d8d8d8;">225</div>
<div class="t" style="left:1567.8000000000002px;width:600px;text-align:center;top:632.84px;font-size:12px;color:#d8d8d8;">240</div>
<div class="a" style="left:966px;top:654px;width:948px;height:18px;background:#262626;"></div>
<div class="a" style="left:963px;top:654px;width:12px;height:308px;background:#1c1c1c;"></div>
<div class="a" style="left:975px;top:654px;width:930px;height:16px;background:#474747;"></div>
<div class="a" style="left:970px;top:653px;width:5px;height:18px;background:#6cc4a8;border-radius:1px"></div>
<div class="a" style="left:1905px;top:653px;width:5px;height:18px;background:#6cc4a8;border-radius:1px"></div>
<div class="a" style="left:975px;top:672px;width:939px;height:290px;background:#282828;"></div>
<div class="a" style="left:975px;top:674px;width:930px;height:18px;background:repeating-linear-gradient(135deg,#88f6b4 0.54px,#88f6b4 1.74px,#73df9d 1.94px,#73df9d 12.92px,#88f6b4 13.12px,#88f6b4 14.32px,#66cb8d 14.52px,#66cb8d 25.50px,#88f6b4 25.70px);border-radius:2px"></div>
<div class="t" style="left:983px;top:677.34px;font-size:12px;color:#1c1c1c;">Color Array</div>
<div class="a" style="left:975px;top:696px;width:930px;height:18px;background:repeating-linear-gradient(135deg,#e2fc92 0.54px,#e2fc92 1.74px,#cdee80 1.94px,#cdee80 12.92px,#e2fc92 13.12px,#e2fc92 14.32px,#b9d970 14.52px,#b9d970 25.50px,#e2fc92 25.70px);border-radius:2px"></div>
<div class="t" style="left:983px;top:699.34px;font-size:12px;color:#1c1c1c;">Random [Index]</div>
<div class="a" style="left:975px;top:718px;width:930px;height:18px;background:#ffffff;border-radius:2px"></div>
<svg class="a" style="left:976.5px;top:719.5px;" width="927" height="15" viewBox="0 0 927 15"><defs><pattern id="dp" x="0" y="0" width="5.8" height="2.9" patternUnits="userSpaceOnUse"><rect width="5.8" height="2.9" fill="#e4f89c"/><rect x="0.4" y="0" width="2.2" height="1.8" fill="#92c258"/><rect x="3.3" y="1.45" width="2.2" height="1.8" fill="#92c258"/></pattern></defs><rect width="927" height="15" fill="url(#dp)"/></svg>
<div class="t" style="left:983px;top:721.34px;font-size:12px;color:#1c1c1c;">Oscillator [Position.Z] Cosine</div>
<div class="a" style="left:975px;top:740px;width:930px;height:18px;background:repeating-linear-gradient(135deg,#e2fc92 0.54px,#e2fc92 1.74px,#cdee80 1.94px,#cdee80 12.92px,#e2fc92 13.12px,#e2fc92 14.32px,#b9d970 14.52px,#b9d970 25.50px,#e2fc92 25.70px);border-radius:2px"></div>
<div class="t" style="left:983px;top:743.34px;font-size:12px;color:#1c1c1c;">Oscillator [Position.X] Sine</div>
<div class="a" style="left:975px;top:762px;width:930px;height:18px;background:repeating-linear-gradient(135deg,#e2fc92 0.54px,#e2fc92 1.74px,#cdee80 1.94px,#cdee80 12.92px,#e2fc92 13.12px,#e2fc92 14.32px,#b9d970 14.52px,#b9d970 25.50px,#e2fc92 25.70px);border-radius:2px"></div>
<div class="t" style="left:983px;top:765.34px;font-size:12px;color:#1c1c1c;">3D Matrix [Duplicator]</div>
<div class="a" style="left:975px;top:784px;width:930px;height:18px;background:#ffe680;border-radius:2px"></div>
<div class="t" style="left:983px;top:787.34px;font-size:12px;color:#1c1c1c;">Duplicator</div>
<div class="a" style="left:975px;top:806px;width:930px;height:18px;background:#ffe680;border-radius:2px"></div>
<div class="t" style="left:983px;top:809.34px;font-size:12px;color:#1c1c1c;">Ellipse Shape</div>
<div class="a" style="left:975px;top:828px;width:930px;height:18px;background:repeating-linear-gradient(135deg,#7caaf8 0.54px,#7caaf8 1.74px,#6592e8 1.94px,#6592e8 12.92px,#7caaf8 13.12px,#7caaf8 14.32px,#5a86d8 14.52px,#5a86d8 25.50px,#7caaf8 25.70px);border-radius:2px"></div>
<div class="t" style="left:983px;top:831.34px;font-size:12px;color:#f4f4f4;">Index Context [Number]</div>
<div class="a" style="left:975px;top:850px;width:930px;height:18px;background:repeating-linear-gradient(135deg,#7caaf8 0.54px,#7caaf8 1.74px,#6592e8 1.94px,#6592e8 12.92px,#7caaf8 13.12px,#7caaf8 14.32px,#5a86d8 14.52px,#5a86d8 25.50px,#7caaf8 25.70px);border-radius:2px"></div>
<div class="t" style="left:983px;top:853.34px;font-size:12px;color:#f4f4f4;">String Generator [String]</div>
<div class="a" style="left:975px;top:872px;width:930px;height:18px;background:#b78ffa;border-radius:2px"></div>
<div class="t" style="left:983px;top:875.34px;font-size:12px;color:#f4f4f4;">Cavalry</div>
<div class="a" style="left:1060px;top:652px;width:1px;height:308px;background:#6cc4a4;"></div>
<svg class="a" style="left:1053px;top:642px;" width="15" height="11" viewBox="0 0 15 11"><path d="M0.5 1 H14.5 L7.5 10.5Z" fill="#6cc4a4"/></svg>
<div class="a" style="left:963px;top:961px;width:951px;height:15px;background:#262626;"></div>
<div class="a" style="left:967px;top:964px;width:946px;height:10px;background:#474747;border-radius:5px"></div>
<div class="a" style="left:966px;top:976px;width:948px;height:22px;background:#474747;"></div>
<div class="a" style="left:969.5px;top:977.5px;width:19px;height:19px;background:#292929;border-radius:4px;box-shadow:inset 0 0 0 1px #222"></div>
<svg class="a" style="left:969.5px;top:977.5px;" width="19" height="19" viewBox="0 0 19 19"><path d="M3 5 H16 M3 9.5 H12 M3 14 H7 M10 14 H12" stroke="#d5d5d5" stroke-width="1.5"/><path d="M15 18 L18 15 V18Z" fill="#6cc4a4"/></svg>
<div class="a" style="left:990px;top:978.5px;width:150px;height:16px;background:#292929;border-radius:3px"></div>
<div class="t" style="left:992.5px;top:981.84px;font-size:12px;color:#e8e8e8;">Default Keyframe Layer</div>
<div class="a" style="left:1146px;top:978.5px;width:70px;height:16px;background:#292929;border-radius:3px"></div>
<div class="t" style="left:1151px;top:982.69px;font-size:11px;color:#555555;">F</div>
<div class="t" style="left:1164px;top:981.84px;font-size:12px;color:#d8d8d8;">-</div>
<div class="t" style="left:1222px;top:981.84px;font-size:12px;color:#e6e6e6;">Align:</div>
<div class="a" style="left:1259px;top:977.5px;width:52.5px;height:19.5px;background:#292929;border-radius:4px;box-shadow:inset 0 0 0 1px #222"></div>
<svg class="a" style="left:1259.0px;top:977.5px;" width="17.5" height="19" viewBox="0 0 17.5 19"><path d="M3.5 4 V15" stroke="#d5d5d5" stroke-width="1"/><path d="M6 7 H8 M10 7 H14 M6 12 H14" stroke="#d5d5d5" stroke-width="1.5"/></svg>
<svg class="a" style="left:1276.5px;top:977.5px;" width="17.5" height="19" viewBox="0 0 17.5 19"><path d="M8.75 3 V16" stroke="#d5d5d5" stroke-width="1" stroke-dasharray="2 1"/><path d="M4 7 H7 M10 7 H13 M4 12 H13" stroke="#d5d5d5" stroke-width="1.5"/></svg>
<div class="a" style="left:1276.5px;top:978.5px;width:1px;height:17.5px;background:#3a3a3a;"></div>
<svg class="a" style="left:1294.0px;top:977.5px;" width="17.5" height="19" viewBox="0 0 17.5 19"><path d="M14 4 V15" stroke="#d5d5d5" stroke-width="1"/><path d="M4 7 H8 M10 7 H12 M4 12 H12" stroke="#d5d5d5" stroke-width="1.5"/></svg>
<div class="a" style="left:1294.0px;top:978.5px;width:1px;height:17.5px;background:#3a3a3a;"></div>
<div class="a" style="left:1316px;top:977.5px;width:17.5px;height:19.5px;background:#292929;border-radius:4px;box-shadow:inset 0 0 0 1px #222"></div>
<svg class="a" style="left:1316px;top:977.5px;" width="18" height="19" viewBox="0 0 18 19"><rect x="3.5" y="4.5" width="11" height="11" fill="none" stroke="#d5d5d5" stroke-width="1" stroke-dasharray="2 1"/><circle cx="9" cy="10" r="1.2" fill="#d5d5d5"/></svg>
<div class="a" style="left:1338px;top:977.5px;width:31px;height:19.5px;background:#292929;border-radius:4px;box-shadow:inset 0 0 0 1px #222"></div>
<svg class="a" style="left:1338px;top:977.5px;" width="31" height="19" viewBox="0 0 31 19"><path d="M4 11 A5 5 0 0 1 13 8 L12 13" fill="none" stroke="#d5d5d5" stroke-width="2.2"/><path d="M21 6 L26 9.5 L21 13Z" fill="none" stroke="#9a9a9a" stroke-width="0.9"/></svg>
<div class="a" style="left:1354px;top:978.5px;width:1px;height:17.5px;background:#3a3a3a;"></div>
<div class="a" style="left:1373px;top:977.5px;width:31px;height:19.5px;background:#292929;border-radius:4px;box-shadow:inset 0 0 0 1px #222"></div>
<svg class="a" style="left:1373px;top:977.5px;" width="31" height="19" viewBox="0 0 31 19"><path d="M8 4 V16 M10.5 6 V14" stroke="#d5d5d5" stroke-width="1"/><path d="M2 10 H6 M12 10 H16" stroke="#d5d5d5" stroke-width="1"/><path d="M21 6 L26 9.5 L21 13Z" fill="none" stroke="#9a9a9a" stroke-width="0.9"/></svg>
<div class="a" style="left:1389px;top:978.5px;width:1px;height:17.5px;background:#3a3a3a;"></div>
<svg class="a" style="left:1742px;top:979px;" width="16" height="16" viewBox="0 0 16 16"><circle cx="7" cy="7" r="5.3" fill="none" stroke="#cfcfcf" stroke-width="1.1"/><path d="M4.5 7 H9.5" stroke="#cfcfcf" stroke-width="1.1"/><path d="M11 11 L13.5 13.5" stroke="#cfcfcf" stroke-width="1.8"/></svg>
<div class="a" style="left:1763px;top:985.5px;width:120px;height:3px;background:#3c3c3c;border-radius:2px"></div>
<svg class="a" style="left:1761px;top:981px;" width="12" height="12" viewBox="0 0 12 12"><circle cx="6" cy="6" r="5.5" fill="#6cc4a4"/><circle cx="6" cy="6" r="1.5" fill="#4a9a80"/></svg>
<svg class="a" style="left:1886px;top:979px;" width="16" height="16" viewBox="0 0 16 16"><circle cx="7" cy="7" r="5.3" fill="none" stroke="#cfcfcf" stroke-width="1.1"/><path d="M4.5 7 H9.5 M7 4.5 V9.5" stroke="#cfcfcf" stroke-width="1.1"/><path d="M11 11 L13.5 13.5" stroke="#cfcfcf" stroke-width="1.8"/></svg>
<div class="a" style="left:494px;top:998px;width:1426px;height:6px;background:#121212;"></div>
<div class="a" style="left:494px;top:1004px;width:1420px;height:22px;background:#3a3a3a;"></div>
<div class="a" style="left:498px;top:1008px;width:3px;height:3px;background:#7a7a7a;"></div>
<div class="a" style="left:498px;top:1013px;width:3px;height:3px;background:#7a7a7a;"></div>
<div class="a" style="left:498px;top:1018px;width:3px;height:3px;background:#7a7a7a;"></div>
<div class="a" style="left:507.5px;top:1005.5px;width:17px;height:18px;background:#292929;border-radius:3px;box-shadow:inset 0 0 0 1px #222"></div>
<svg class="a" style="left:507.5px;top:1005.5px;" width="17" height="18" viewBox="0 0 17 18"><path d="M2 3 H15 V13 H12 L13 16 L9 13 H2Z" fill="#dcdcdc"/><path d="M4 5.5 H5.5 M7 5.5 H13 M4 8 H5.5 M7 8 H13 M4 10.5 H5.5 M7 10.5 H13" stroke="#292929" stroke-width="1.1"/><path d="M13 18 L16 15 V18Z" fill="#6cc4a4"/></svg>
<div class="a" style="left:528px;top:1008px;width:18px;height:14px;background:#2ecc71;border-radius:2px"></div>
<div class="t" style="left:237px;width:600px;text-align:center;top:1009.34px;font-size:12px;color:#111111;">2</div>
<div class="a" style="left:553.5px;top:1011.5px;width:6px;height:6px;border-radius:50%;background:#2ecc71"></div>
<div class="t" style="left:565px;top:1010.27px;font-size:11.5px;color:#e6e6e6;">Save reminder: 10 minutes since your last save.</div>
<div class="t" style="left:1482px;top:1010.19px;font-size:11px;color:#e0e0e0;font-style:italic;letter-spacing:-0.3px">Click to see next message</div>
<div class="a" style="left:1610px;top:1006px;width:80px;height:18px;background:#cdb870;border-radius:3px"></div>
<div class="t" style="left:1616px;top:1009.54px;font-size:12px;color:#2a2a2a;">Feedback</div>
<svg class="a" style="left:1670px;top:1008px;" width="14" height="15" viewBox="0 0 14 15"><path d="M1.5 1.5 H8 L11.5 5 V13.5 H1.5Z" fill="#eee" stroke="#3fd43f" stroke-width="1"/><path d="M4 12 L10 6" stroke="#ff8030" stroke-width="2.5"/><circle cx="11" cy="5" r="1.5" fill="#ff3a6a"/></svg>
<div class="a" style="left:1693px;top:1006px;width:109px;height:18px;background:#2ecc71;border-radius:3px"></div>
<div class="t" style="left:1699px;top:1009.54px;font-size:12px;color:#1f1f1f;">Upgrade to Pro</div>
<svg class="a" style="left:1781px;top:1009px;" width="16" height="13" viewBox="0 0 16 13"><ellipse cx="4.5" cy="8" rx="3.8" ry="4.5" fill="#f5c518"/><ellipse cx="11.5" cy="8" rx="3.8" ry="4.5" fill="#f5c518"/><path d="M3 1 L4 3 M8 0.5 V2.5 M13 1 L12 3" stroke="#f5c518" stroke-width="0.8"/></svg>
<div class="a" style="left:1805px;top:1006px;width:106px;height:18px;background:#3ba8f0;border-radius:3px"></div>
<div class="t" style="left:1811px;top:1009.54px;font-size:12px;color:#1f1f1f;">Tips and Tricks</div>
<svg class="a" style="left:1891px;top:1008px;" width="15" height="15" viewBox="0 0 15 15"><path d="M13.5 1.5 C9 2 6 5 4.5 9 L6.5 11 C10.5 9.5 13.5 6 13.5 1.5Z" fill="#eee"/><circle cx="10" cy="5.5" r="1.3" fill="#3ba8f0"/><path d="M4.5 9 L2 9.5 L4 6.5 M6.5 11 L6 13.5 L9 11.5" fill="#e53935"/><path d="M3.5 11.5 L1.5 13.5" stroke="#ff9800" stroke-width="1.6"/></svg>
</body></html>
